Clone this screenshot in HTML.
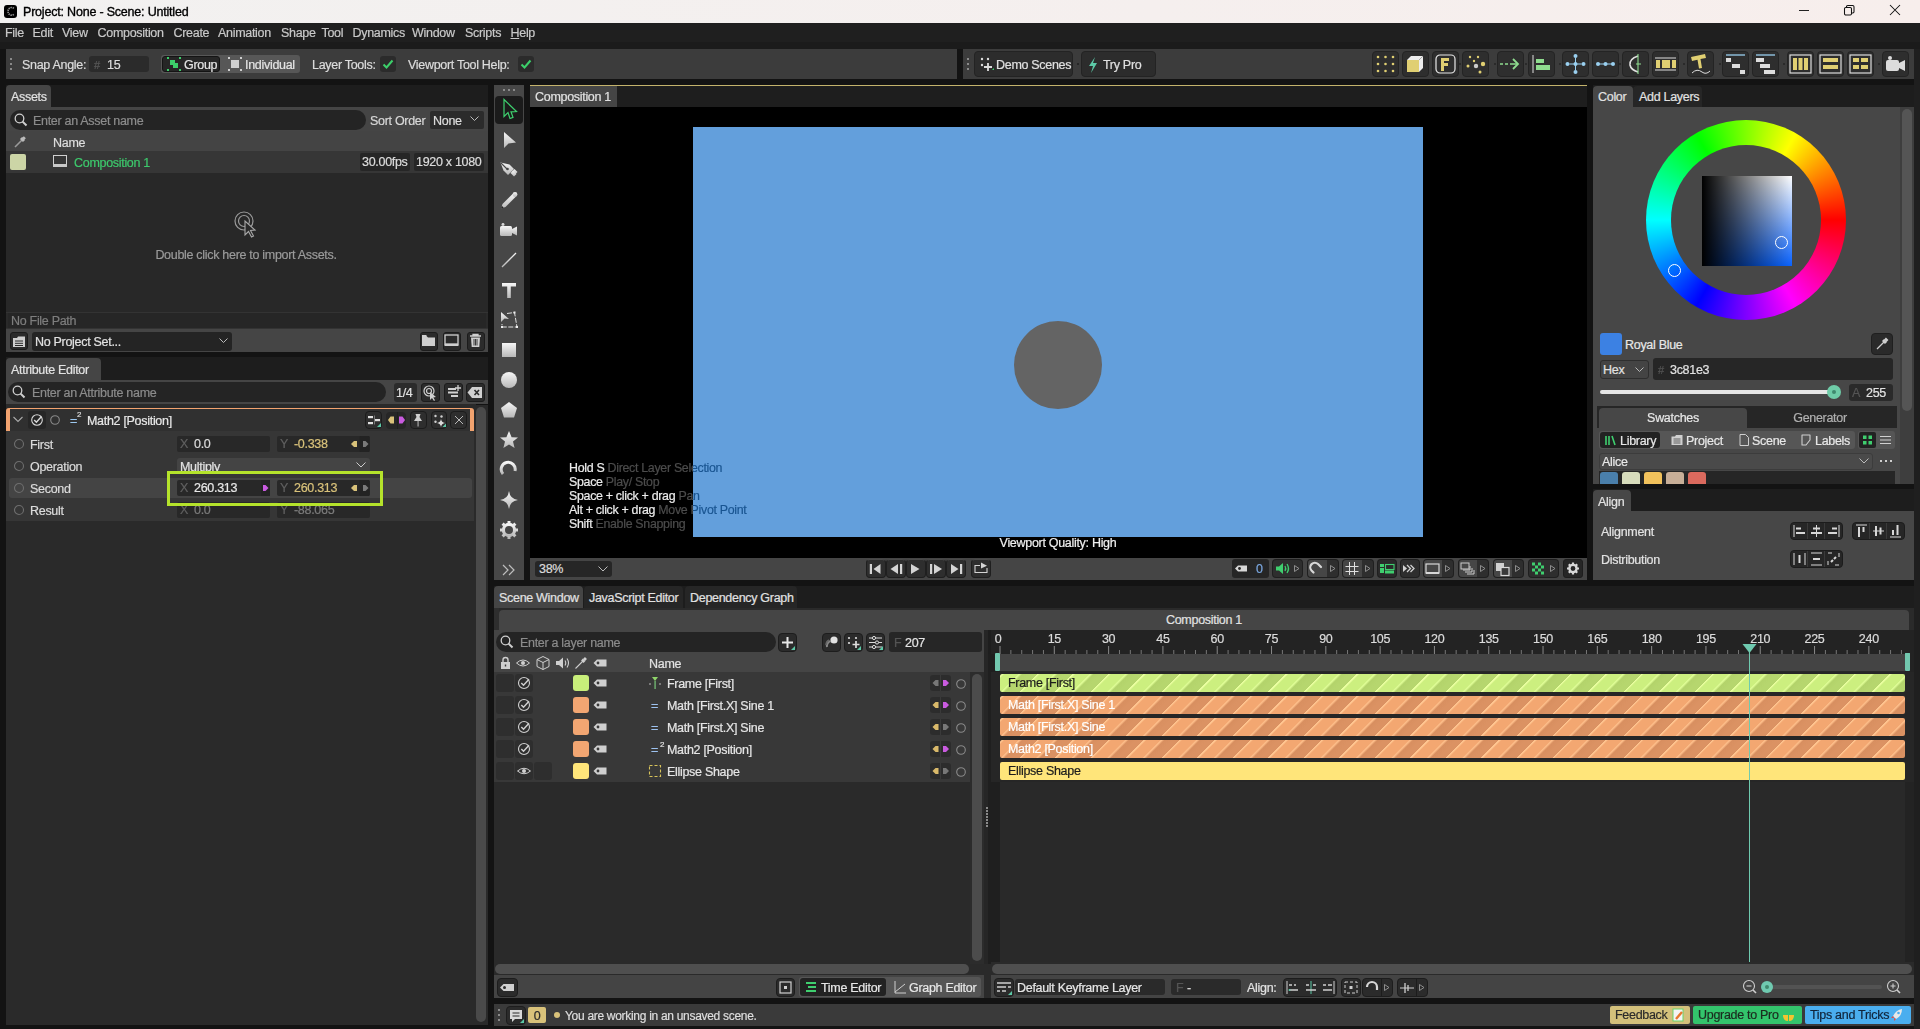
<!DOCTYPE html>
<html><head><meta charset="utf-8"><style>
html,body{margin:0;padding:0;}
body{width:1920px;height:1029px;overflow:hidden;position:relative;background:#131313;font-family:"Liberation Sans",sans-serif;}
.a{position:absolute;box-sizing:border-box;}
.t{white-space:nowrap;letter-spacing:-0.3px;-webkit-text-stroke-width:0.2px;}
</style></head><body>
<div class="a" style="left:0px;top:0px;width:1920px;height:23px;background:linear-gradient(to right,#f2f1f0,#f5efee 60%,#f7eeec);"></div>
<div class="a" style="left:4px;top:4.5px;width:12.5px;height:13px;border-radius:3px;background:#000;"></div>
<svg class="a" style="left:4px;top:4px;" width="13" height="14" viewBox="0 0 13 14"><path d="M9.8 4.3 A3.6 3.8 0 1 0 9.8 10.3" stroke="#9a9a9a" stroke-width="1.6" fill="none" stroke-dasharray="1.3 0.8"/></svg>
<div class="a t" style="left:23px;top:1.5px;height:20px;line-height:20px;font-size:12.5px;color:#000000;-webkit-text-stroke-width:0.35px;letter-spacing:-0.2px;">Project: None - Scene: Untitled</div>
<div class="a" style="left:1799px;top:10px;width:10px;height:1px;background:#222;"></div>
<svg class="a" style="left:1843px;top:4px;" width="13" height="13" viewBox="0 0 13 13"><rect x="1.5" y="3.5" width="7" height="7.5" rx="1.3" stroke="#111" stroke-width="1.05" fill="none"/><path d="M3.5 3 V2.8 Q3.5 1.5 4.8 1.5 H9.7 Q11 1.5 11 2.8 V7.8 Q11 9 9.8 9 H9" stroke="#111" stroke-width="1.05" fill="none"/></svg>
<svg class="a" style="left:1889px;top:4px;" width="12" height="12" viewBox="0 0 12 12"><path d="M1 1 L11 11 M11 1 L1 11" stroke="#111" stroke-width="1.05"/></svg>
<div class="a" style="left:0px;top:23px;width:1920px;height:26px;background:#1f1f1f;"></div>
<div class="a" style="left:0px;top:41.5px;width:1920px;height:7.5px;background:#1b1b1b;"></div>
<div class="a t" style="left:5px;top:23.0px;height:20px;line-height:20px;font-size:12.5px;color:#c9c9c9;">File</div>
<div class="a t" style="left:32.5px;top:23.0px;height:20px;line-height:20px;font-size:12.5px;color:#c9c9c9;">Edit</div>
<div class="a t" style="left:62px;top:23.0px;height:20px;line-height:20px;font-size:12.5px;color:#c9c9c9;">View</div>
<div class="a t" style="left:97.5px;top:23.0px;height:20px;line-height:20px;font-size:12.5px;color:#c9c9c9;">Composition</div>
<div class="a t" style="left:173.5px;top:23.0px;height:20px;line-height:20px;font-size:12.5px;color:#c9c9c9;">Create</div>
<div class="a t" style="left:218px;top:23.0px;height:20px;line-height:20px;font-size:12.5px;color:#c9c9c9;">Animation</div>
<div class="a t" style="left:281px;top:23.0px;height:20px;line-height:20px;font-size:12.5px;color:#c9c9c9;">Shape</div>
<div class="a t" style="left:321.5px;top:23.0px;height:20px;line-height:20px;font-size:12.5px;color:#c9c9c9;">Tool</div>
<div class="a t" style="left:352.5px;top:23.0px;height:20px;line-height:20px;font-size:12.5px;color:#c9c9c9;">Dynamics</div>
<div class="a t" style="left:412px;top:23.0px;height:20px;line-height:20px;font-size:12.5px;color:#c9c9c9;">Window</div>
<div class="a t" style="left:465px;top:23.0px;height:20px;line-height:20px;font-size:12.5px;color:#c9c9c9;">Scripts</div>
<div class="a t" style="left:510.5px;top:23.0px;height:20px;line-height:20px;font-size:12.5px;color:#c9c9c9;"><u>H</u>elp</div>
<div class="a" style="left:0px;top:49px;width:1920px;height:36px;background:#131313;"></div>
<div class="a" style="left:6px;top:49px;width:951px;height:30px;background:#3c3c3c;"></div>
<div class="a" style="left:10px;top:58px;width:2px;height:2px;background:#8a8a8a;"></div>
<div class="a" style="left:10px;top:63px;width:2px;height:2px;background:#8a8a8a;"></div>
<div class="a" style="left:10px;top:68px;width:2px;height:2px;background:#8a8a8a;"></div>
<div class="a t" style="left:22px;top:54.5px;height:20px;line-height:20px;font-size:12.5px;color:#dcdcdc;">Snap Angle:</div>
<div class="a" style="left:89px;top:56px;width:60px;height:16px;background:#2b2b2b;border-radius:3px;"></div>
<div class="a t" style="left:94px;top:54.5px;height:20px;line-height:20px;font-size:11px;color:#5a5a5a;">#</div>
<div class="a t" style="left:107px;top:54.5px;height:20px;line-height:20px;font-size:12.5px;color:#dcdcdc;">15</div>
<div class="a" style="left:161px;top:55px;width:139px;height:18px;background:#575757;border-radius:3px;"></div>
<div class="a" style="left:162px;top:56px;width:58px;height:16px;background:#262626;border-radius:3px;border:1px solid #141414;"></div>
<svg class="a" style="left:167px;top:57px;" width="14" height="14" viewBox="0 0 14 14"><rect x="3" y="3" width="5" height="5" fill="#3ccf6a"/><rect x="6" y="6" width="5" height="5" fill="#3ccf6a"/><rect x="0" y="0" width="2" height="2" fill="#3ccf6a"/><rect x="12" y="0" width="2" height="2" fill="#3ccf6a"/><rect x="0" y="12" width="2" height="2" fill="#3ccf6a"/><rect x="12" y="12" width="2" height="2" fill="#3ccf6a"/></svg>
<div class="a t" style="left:184px;top:54.5px;height:20px;line-height:20px;font-size:12.5px;color:#e4e4e4;">Group</div>
<svg class="a" style="left:228px;top:57px;" width="14" height="14" viewBox="0 0 14 14"><rect x="3" y="3" width="8" height="8" fill="#cfcfcf"/><rect x="0" y="0" width="2" height="2" fill="#cfcfcf"/><rect x="12" y="0" width="2" height="2" fill="#cfcfcf"/><rect x="0" y="12" width="2" height="2" fill="#cfcfcf"/><rect x="12" y="12" width="2" height="2" fill="#cfcfcf"/></svg>
<div class="a t" style="left:245px;top:54.5px;height:20px;line-height:20px;font-size:12.5px;color:#e4e4e4;">Individual</div>
<div class="a t" style="left:312px;top:54.5px;height:20px;line-height:20px;font-size:12.5px;color:#dcdcdc;">Layer Tools:</div>
<div class="a" style="left:380px;top:56px;width:16px;height:16px;background:#2b2b2b;border-radius:3px;"></div>
<svg class="a" style="left:380px;top:56px;" width="16" height="16" viewBox="0 0 16 16"><path d="M3.5 8.5 L6.5 11.5 L12.5 4.5" stroke="#3ccf6a" stroke-width="2" fill="none"/></svg>
<div class="a t" style="left:408px;top:54.5px;height:20px;line-height:20px;font-size:12.5px;color:#dcdcdc;">Viewport Tool Help:</div>
<div class="a" style="left:518px;top:56px;width:16px;height:16px;background:#2b2b2b;border-radius:3px;"></div>
<svg class="a" style="left:518px;top:56px;" width="16" height="16" viewBox="0 0 16 16"><path d="M3.5 8.5 L6.5 11.5 L12.5 4.5" stroke="#3ccf6a" stroke-width="2" fill="none"/></svg>
<div class="a" style="left:963px;top:49px;width:951px;height:30px;background:#3c3c3c;"></div>
<div class="a" style="left:967px;top:58px;width:2px;height:2px;background:#8a8a8a;"></div>
<div class="a" style="left:967px;top:63px;width:2px;height:2px;background:#8a8a8a;"></div>
<div class="a" style="left:967px;top:68px;width:2px;height:2px;background:#8a8a8a;"></div>
<div class="a" style="left:974px;top:51px;width:99px;height:26px;background:#2c2c2c;border-radius:4px;border:1px solid #232323;"></div>
<svg class="a" style="left:979px;top:56px;" width="16" height="16" viewBox="0 0 16 16"><circle cx="3" cy="3" r="1.2" fill="#ddd"/><circle cx="9" cy="3" r="1.2" fill="#ddd"/><circle cx="3" cy="9" r="1.2" fill="#ddd"/><path d="M9 7 V15 M5 11 H13" stroke="#ddd" stroke-width="1.8"/><path d="M13 14 L15 12 V14 Z" fill="#3ccf6a"/></svg>
<div class="a t" style="left:996px;top:54.5px;height:20px;line-height:20px;font-size:12.5px;color:#e0e0e0;">Demo Scenes</div>
<div class="a" style="left:1077px;top:63px;width:2px;height:2px;background:#262626;"></div>
<div class="a" style="left:1081px;top:51px;width:75px;height:26px;background:#2c2c2c;border-radius:4px;border:1px solid #232323;"></div>
<svg class="a" style="left:1087px;top:57px;" width="12" height="16" viewBox="0 0 12 16"><path d="M8 0 L2 9 H6 L4 16 L10 6 H6 Z" fill="#5cc9a7"/></svg>
<div class="a t" style="left:1103px;top:54.5px;height:20px;line-height:20px;font-size:12.5px;color:#e0e0e0;">Try Pro</div>
<div class="a" style="left:6px;top:85px;width:482px;height:22px;background:#1d1d1d;"></div>
<div class="a" style="left:6px;top:85px;width:45px;height:22px;background:#454545;border-radius:4px 4px 0 0;"></div>
<div class="a t" style="left:11px;top:86.5px;height:20px;line-height:20px;font-size:12.5px;color:#e2e2e2;">Assets</div>
<div class="a" style="left:6px;top:107px;width:482px;height:45px;background:#454545;"></div>
<div class="a" style="left:10px;top:110px;width:356px;height:20px;background:#242424;border-radius:10px;"></div>
<svg class="a" style="left:14px;top:113px;" width="14" height="14" viewBox="0 0 14 14"><circle cx="5.5" cy="5.5" r="4.3" stroke="#cfcfcf" stroke-width="1.3" fill="none"/><path d="M8.6 8.6 L12.5 12.5" stroke="#cfcfcf" stroke-width="2"/></svg>
<div class="a t" style="left:33px;top:110.5px;height:20px;line-height:20px;font-size:12.5px;color:#8c8c8c;">Enter an Asset name</div>
<div class="a t" style="left:370px;top:110.5px;height:20px;line-height:20px;font-size:12.5px;color:#d8d8d8;">Sort Order</div>
<div class="a" style="left:430px;top:111px;width:54px;height:18px;background:#2b2b2b;border-radius:2px;"></div>
<div class="a t" style="left:433px;top:110.5px;height:20px;line-height:20px;font-size:12.5px;color:#dedede;">None</div>
<svg class="a" style="left:470px;top:116px;" width="9" height="6" viewBox="0 0 9 6"><path d="M0.5 0.5 L4.5 4.5 L8.5 0.5" stroke="#bbb" stroke-width="1" fill="none"/></svg>
<div class="a" style="left:6px;top:131px;width:482px;height:20px;background:#444444;"></div>
<svg class="a" style="left:13px;top:135px;" width="14" height="14" viewBox="0 0 14 14"><path d="M2 12 L9 5" stroke="#9a9a9a" stroke-width="1.6"/><path d="M8 3 L11 6" stroke="#bbb" stroke-width="3"/><path d="M10 2 L12 4" stroke="#bbb" stroke-width="2.4"/></svg>
<div class="a t" style="left:53px;top:133.0px;height:20px;line-height:20px;font-size:12.5px;color:#dedede;">Name</div>
<div class="a" style="left:6px;top:151px;width:482px;height:22px;background:#363636;"></div>
<div class="a" style="left:10px;top:154px;width:16px;height:16px;background:#ccd5a6;border-radius:2px;"></div>
<svg class="a" style="left:53px;top:155px;" width="15" height="13" viewBox="0 0 15 13"><rect x="0.5" y="0.5" width="13" height="10" stroke="#d0d0d0" stroke-width="1" fill="none"/><rect x="0" y="9" width="14" height="3" fill="#c8c8c8"/></svg>
<div class="a t" style="left:74px;top:152.5px;height:20px;line-height:20px;font-size:12.5px;color:#3dc96c;">Composition 1</div>
<div class="a" style="left:360px;top:153px;width:50px;height:18px;background:#262626;border-radius:2px;"></div>
<div class="a t" style="left:362px;top:152.0px;height:20px;line-height:20px;font-size:12.5px;color:#dcdcdc;">30.00fps</div>
<div class="a" style="left:414px;top:153px;width:70px;height:18px;background:#262626;border-radius:2px;"></div>
<div class="a t" style="left:416px;top:152.0px;height:20px;line-height:20px;font-size:12.5px;color:#dcdcdc;">1920 x 1080</div>
<div class="a" style="left:6px;top:173px;width:482px;height:139px;background:#282828;"></div>
<svg class="a" style="left:234px;top:211px;" width="24" height="28" viewBox="0 0 24 28"><circle cx="10" cy="10" r="9" stroke="#9a9a9a" stroke-width="1.2" fill="none"/><circle cx="10" cy="10" r="5.5" stroke="#9a9a9a" stroke-width="1.2" fill="none"/><path d="M11 10 L11 24 L14.5 20.5 L17.5 26 L19.5 25 L16.5 19.5 L21 19 Z" fill="#2a2a2a" stroke="#a8a8a8" stroke-width="1.1"/></svg>
<div class="a t" style="left:96.0px;top:245.0px;width:300px;text-align:center;height:20px;line-height:20px;font-size:12.5px;color:#9b9b9b;">Double click here to import Assets.</div>
<div class="a" style="left:6px;top:312px;width:482px;height:17px;background:#2a2a2a;border-top:1px solid #333;border-bottom:1px solid #333;"></div>
<div class="a" style="left:8px;top:313px;width:478px;height:15px;background:#262626;"></div>
<div class="a t" style="left:11px;top:311.0px;height:20px;line-height:20px;font-size:12.5px;color:#7e7e7e;">No File Path</div>
<div class="a" style="left:6px;top:329px;width:482px;height:23px;background:#454545;"></div>
<div class="a" style="left:10px;top:332px;width:18px;height:18px;background:#2b2b2b;border-radius:3px;border:1px solid #1c1c1c;"></div>
<svg class="a" style="left:12px;top:335px;" width="14" height="13" viewBox="0 0 14 13"><path d="M1 3 H5 L6 1.5 H13 V12 H1 Z" fill="#cfcfcf"/><path d="M3 6 H11 M3 8.3 H11 M3 10.5 H11" stroke="#2b2b2b" stroke-width="1"/></svg>
<div class="a" style="left:32px;top:332px;width:200px;height:19px;background:#242424;border-radius:3px;"></div>
<div class="a t" style="left:35px;top:331.5px;height:20px;line-height:20px;font-size:12.5px;color:#e2e2e2;">No Project Set...</div>
<svg class="a" style="left:219px;top:338px;" width="9" height="6" viewBox="0 0 9 6"><path d="M0.5 0.5 L4.5 4.5 L8.5 0.5" stroke="#bbb" stroke-width="1" fill="none"/></svg>
<div class="a" style="left:420px;top:332px;width:18px;height:19px;background:#2b2b2b;border-radius:3px;border:1px solid #1c1c1c;"></div>
<svg class="a" style="left:420px;top:332px;" width="18" height="18" viewBox="0 0 18 18"><path d="M2 4 H6.5 L8 5.5 H15 V14 H2 Z" fill="#cfcfcf"/><path d="M2 4 V3 H6 L7 4" fill="#cfcfcf"/></svg>
<div class="a" style="left:443px;top:332px;width:18px;height:19px;background:#2b2b2b;border-radius:3px;border:1px solid #1c1c1c;"></div>
<svg class="a" style="left:443px;top:332px;" width="18" height="18" viewBox="0 0 18 18"><rect x="2" y="3" width="13" height="9" stroke="#d0d0d0" stroke-width="1.3" fill="none"/><rect x="1.5" y="12" width="14" height="2" fill="#cfcfcf"/></svg>
<div class="a" style="left:467px;top:332px;width:18px;height:19px;background:#2b2b2b;border-radius:3px;border:1px solid #1c1c1c;"></div>
<svg class="a" style="left:467px;top:332px;" width="18" height="18" viewBox="0 0 18 18"><path d="M3 4 H14 M6 4 V2.5 H11 V4" stroke="#cfcfcf" stroke-width="1.3" fill="none"/><path d="M4 5.5 H13 L12.3 15 H4.7 Z" fill="#cfcfcf"/><path d="M7 7 V13.5 M8.5 7 V13.5 M10 7 V13.5" stroke="#2b2b2b" stroke-width="0.9"/></svg>
<div class="a" style="left:6px;top:357px;width:482px;height:23px;background:#1d1d1d;"></div>
<div class="a" style="left:6px;top:358px;width:95px;height:22px;background:#454545;border-radius:4px 4px 0 0;"></div>
<div class="a t" style="left:11px;top:359.5px;height:20px;line-height:20px;font-size:12.5px;color:#e2e2e2;">Attribute Editor</div>
<div class="a" style="left:6px;top:380px;width:482px;height:24px;background:#454545;"></div>
<div class="a" style="left:8px;top:382px;width:378px;height:20px;background:#242424;border-radius:10px;"></div>
<svg class="a" style="left:12px;top:385px;" width="14" height="14" viewBox="0 0 14 14"><circle cx="5.5" cy="5.5" r="4.3" stroke="#cfcfcf" stroke-width="1.3" fill="none"/><path d="M8.6 8.6 L12.5 12.5" stroke="#cfcfcf" stroke-width="2"/></svg>
<div class="a t" style="left:32px;top:382.5px;height:20px;line-height:20px;font-size:12.5px;color:#8c8c8c;">Enter an Attribute name</div>
<div class="a" style="left:394px;top:383px;width:23px;height:19px;background:#2b2b2b;border-radius:3px;"></div>
<div class="a t" style="left:396px;top:382.5px;height:20px;line-height:20px;font-size:12.5px;color:#e0e0e0;">1/4</div>
<div class="a" style="left:421px;top:383px;width:19px;height:19px;background:#2b2b2b;border-radius:3px;border:1px solid #1c1c1c;"></div>
<div class="a" style="left:444px;top:383px;width:19px;height:19px;background:#2b2b2b;border-radius:3px;border:1px solid #1c1c1c;"></div>
<div class="a" style="left:466px;top:383px;width:19px;height:19px;background:#2b2b2b;border-radius:3px;border:1px solid #1c1c1c;"></div>
<svg class="a" style="left:421px;top:383px;" width="19" height="19" viewBox="0 0 19 19"><circle cx="8" cy="8" r="5" stroke="#d0d0d0" stroke-width="1.2" fill="none"/><circle cx="8" cy="8" r="2.5" stroke="#d0d0d0" stroke-width="1.2" fill="none"/><path d="M9 9 L9 17 L11 15 L13 18 L14 17.3 L12.3 14.5 L15 14 Z" fill="#d0d0d0"/></svg>
<svg class="a" style="left:444px;top:383px;" width="19" height="19" viewBox="0 0 19 19"><path d="M4 6 H12 M4 9.5 H14 M7 13 H14" stroke="#d0d0d0" stroke-width="1.8"/><path d="M14 2 V8 M11 5 H17" stroke="#d0d0d0" stroke-width="1.3"/></svg>
<svg class="a" style="left:466px;top:383px;" width="19" height="19" viewBox="0 0 19 19"><path d="M6 4 H16 V15 H6 L1.5 9.5 Z" fill="#d0d0d0"/><path d="M8.5 7 L13 12 M13 7 L8.5 12" stroke="#2b2b2b" stroke-width="1.6"/></svg>
<div class="a" style="left:6px;top:405px;width:482px;height:620px;background:#2a2a2a;"></div>
<div class="a" style="left:476px;top:407px;width:10px;height:615px;background:#4a4a4a;border-radius:5px;"></div>
<div class="a" style="left:6px;top:404px;width:470px;height:4px;background:#2a2a2a;"></div>
<div class="a" style="left:6px;top:408px;width:468px;height:23px;background:#303030;border-top:1.5px solid #f2a36f;border-left:4px solid #f2a36f;border-right:4px solid #f2a36f;border-radius:3px 3px 0 0;"></div>
<div class="a" style="left:6px;top:431px;width:468px;height:1px;background:#2a2a2a;"></div>
<svg class="a" style="left:13px;top:416px;" width="10" height="7" viewBox="0 0 10 7"><path d="M0.5 1 L5 5.5 L9.5 1" stroke="#aaa" stroke-width="1.1" fill="none"/></svg>
<div class="a" style="left:28px;top:411px;width:18px;height:18px;background:#262626;border-radius:3px;"></div>
<svg class="a" style="left:28px;top:411px;" width="18" height="18" viewBox="0 0 18 18"><circle cx="9" cy="9" r="5.3" stroke="#d8d8d8" stroke-width="1.1" fill="none"/><path d="M6.2 9 L8.4 11.2 L13.5 5.5" stroke="#d8d8d8" stroke-width="1.5" fill="none"/></svg>
<svg class="a" style="left:49px;top:413px;" width="14" height="14" viewBox="0 0 14 14"><circle cx="6" cy="7" r="4.3" stroke="#888" stroke-width="1.1" fill="none"/></svg>
<div class="a t" style="left:70px;top:411.0px;height:20px;line-height:20px;font-size:12.5px;color:#9ec8f0;">=</div>
<div class="a t" style="left:77px;top:410.0px;height:10px;line-height:10px;font-size:8px;color:#d8d8d8;">2</div>
<div class="a t" style="left:87px;top:410.5px;height:20px;line-height:20px;font-size:12.5px;color:#e8e8e8;">Math2 [Position]</div>
<div class="a" style="left:365px;top:411px;width:17px;height:18px;background:#2e2e2e;border-radius:4px;border:1px solid #1c1c1c;"></div>
<div class="a" style="left:410px;top:411px;width:17px;height:18px;background:#2e2e2e;border-radius:4px;border:1px solid #1c1c1c;"></div>
<div class="a" style="left:431px;top:411px;width:16px;height:18px;background:#2e2e2e;border-radius:4px;border:1px solid #1c1c1c;"></div>
<div class="a" style="left:450px;top:411px;width:17px;height:18px;background:#2e2e2e;border-radius:4px;border:1px solid #1c1c1c;"></div>
<div class="a" style="left:386px;top:412px;width:20px;height:17px;background:#262626;border-radius:4px;"></div>
<div class="a" style="left:397px;top:412px;width:1px;height:17px;background:#1f1f1f;"></div>
<svg class="a" style="left:360px;top:405px;" width="120" height="30" viewBox="0 0 120 30"><rect x="8" y="11" width="5" height="2.2" fill="#e0e0e0"/><rect x="8" y="17" width="5" height="2.2" fill="#e0e0e0"/><rect x="14" y="10.5" width="1" height="9" fill="#777"/><rect x="15" y="14" width="5" height="2.2" fill="#e0e0e0"/><path d="M21 22 V18 L17 22 Z" fill="#5cc9a7"/>
<path d="M34 11.5 H30.5 L28 15 L30.5 18.5 H34 Z" fill="#d9c27a"/><path d="M39 11.5 H42.5 L45 15 L42.5 18.5 H39 Z" fill="#c95be0"/>
<path d="M55.5 9 H60.5 L59.5 12 L62 16 H54 L56.5 12 Z" fill="#d0d0d0"/><rect x="57.6" y="16" width="0.9" height="5.5" fill="#d0d0d0"/>
<circle cx="75.5" cy="11" r="1.2" fill="#cfcfcf"/><circle cx="81.5" cy="11.5" r="1.2" fill="#cfcfcf"/><circle cx="75.5" cy="16.8" r="1.2" fill="#cfcfcf"/><path d="M81 14 Q81.5 17.5 85 18 Q81.5 18.5 81 22 Q80.5 18.5 77 18 Q80.5 17.5 81 14 Z" fill="#dcdcdc"/><path d="M86 22 V18.5 L82.5 22 Z" fill="#5cc9a7"/>
<path d="M95 11 L103 19 M103 11 L95 19" stroke="#c8c8c8" stroke-width="0.9"/></svg>
<div class="a" style="left:6px;top:431px;width:468px;height:90px;background:#363636;"></div>
<div class="a" style="left:9px;top:478px;width:463px;height:20px;background:#444444;border-radius:3px;"></div>
<svg class="a" style="left:13px;top:438px;" width="12" height="12" viewBox="0 0 12 12"><circle cx="6" cy="6" r="4.5" stroke="#6e6e6e" stroke-width="1.1" fill="none"/></svg>
<div class="a t" style="left:30px;top:435.0px;height:20px;line-height:20px;font-size:12.5px;color:#dcdcdc;">First</div>
<svg class="a" style="left:13px;top:460px;" width="12" height="12" viewBox="0 0 12 12"><circle cx="6" cy="6" r="4.5" stroke="#6e6e6e" stroke-width="1.1" fill="none"/></svg>
<div class="a t" style="left:30px;top:457.0px;height:20px;line-height:20px;font-size:12.5px;color:#dcdcdc;">Operation</div>
<svg class="a" style="left:13px;top:482px;" width="12" height="12" viewBox="0 0 12 12"><circle cx="6" cy="6" r="4.5" stroke="#6e6e6e" stroke-width="1.1" fill="none"/></svg>
<div class="a t" style="left:30px;top:479.0px;height:20px;line-height:20px;font-size:12.5px;color:#dcdcdc;">Second</div>
<svg class="a" style="left:13px;top:504px;" width="12" height="12" viewBox="0 0 12 12"><circle cx="6" cy="6" r="4.5" stroke="#6e6e6e" stroke-width="1.1" fill="none"/></svg>
<div class="a t" style="left:30px;top:501.0px;height:20px;line-height:20px;font-size:12.5px;color:#dcdcdc;">Result</div>
<div class="a" style="left:177px;top:436px;width:93px;height:16px;background:#282828;border-radius:2px;"></div>
<div class="a t" style="left:180px;top:434.0px;height:20px;line-height:20px;font-size:12.5px;color:#606060;">X</div>
<div class="a t" style="left:194px;top:434.0px;height:20px;line-height:20px;font-size:12.5px;color:#dcdcdc;">0.0</div>
<div class="a" style="left:277px;top:436px;width:93px;height:16px;background:#282828;border-radius:2px;"></div>
<div class="a t" style="left:280px;top:434.0px;height:20px;line-height:20px;font-size:12.5px;color:#606060;">Y</div>
<div class="a t" style="left:294px;top:434.0px;height:20px;line-height:20px;font-size:12.5px;color:#d9c27a;">-0.338</div>
<svg class="a" style="left:346px;top:436px;" width="24" height="16" viewBox="0 0 24 16"><path d="M11 5 H8 L5 8 L8 11 H11 Z" fill="#d9c27a"/><rect x="13.5" y="0" width="10" height="16" rx="1" fill="#232323"/><path d="M17 5 H19.5 L22.5 8 L19.5 11 H17 Z" fill="#7a7a7a"/></svg>
<div class="a" style="left:177px;top:458px;width:193px;height:16px;background:#444444;border-radius:3px 3px 0 0;"></div>
<div class="a t" style="left:180px;top:456.5px;height:20px;line-height:20px;font-size:12.5px;color:#e2e2e2;">Multiply</div>
<svg class="a" style="left:356px;top:462px;" width="10" height="7" viewBox="0 0 10 7"><path d="M0.5 0.5 L5 5 L9.5 0.5" stroke="#ccc" stroke-width="1" fill="none"/></svg>
<div class="a" style="left:177px;top:480px;width:93px;height:16px;background:#282828;border-radius:2px;"></div>
<div class="a t" style="left:180px;top:478.0px;height:20px;line-height:20px;font-size:12.5px;color:#606060;">X</div>
<div class="a t" style="left:194px;top:478.0px;height:20px;line-height:20px;font-size:12.5px;color:#e8e8e8;">260.313</div>
<svg class="a" style="left:261px;top:480px;" width="9" height="16" viewBox="0 0 9 16"><rect x="0" y="0" width="9" height="16" fill="#232323"/><path d="M2 5 H4.5 L7.5 8 L4.5 11 H2 Z" fill="#c95be0"/></svg>
<div class="a" style="left:277px;top:480px;width:93px;height:16px;background:#282828;border-radius:2px;"></div>
<div class="a t" style="left:280px;top:478.0px;height:20px;line-height:20px;font-size:12.5px;color:#606060;">Y</div>
<div class="a t" style="left:294px;top:478.0px;height:20px;line-height:20px;font-size:12.5px;color:#d9c27a;">260.313</div>
<svg class="a" style="left:346px;top:480px;" width="24" height="16" viewBox="0 0 24 16"><path d="M11 5 H8 L5 8 L8 11 H11 Z" fill="#d9c27a"/><rect x="13.5" y="0" width="10" height="16" rx="1" fill="#232323"/><path d="M17 5 H19.5 L22.5 8 L19.5 11 H17 Z" fill="#7a7a7a"/></svg>
<div class="a" style="left:177px;top:502px;width:93px;height:16px;background:#282828;border-radius:2px;"></div>
<div class="a t" style="left:180px;top:500.0px;height:20px;line-height:20px;font-size:12.5px;color:#606060;">X</div>
<div class="a t" style="left:194px;top:500.0px;height:20px;line-height:20px;font-size:12.5px;color:#7c7c7c;">0.0</div>
<div class="a" style="left:277px;top:502px;width:93px;height:16px;background:#282828;border-radius:2px;"></div>
<div class="a t" style="left:280px;top:500.0px;height:20px;line-height:20px;font-size:12.5px;color:#606060;">Y</div>
<div class="a t" style="left:294px;top:500.0px;height:20px;line-height:20px;font-size:12.5px;color:#7c7c7c;">-88.065</div>
<div class="a" style="left:167px;top:471px;width:216px;height:35px;border:3px solid #b5e32b;"></div>
<div class="a" style="left:494px;top:85px;width:30px;height:495px;background:#474747;"></div>
<div class="a" style="left:503px;top:89px;width:2px;height:2px;background:#8a8a8a;"></div>
<div class="a" style="left:508px;top:89px;width:2px;height:2px;background:#8a8a8a;"></div>
<div class="a" style="left:513px;top:89px;width:2px;height:2px;background:#8a8a8a;"></div>
<div class="a" style="left:495px;top:96px;width:28px;height:28px;background:#1b1b1b;border-radius:4px;"></div>
<svg width="0" height="0" style="position:absolute"><defs><linearGradient id="tg" x1="0" y1="0" x2="0" y2="1"><stop offset="0" stop-color="#f6f6f6"/><stop offset="1" stop-color="#b8b8b8"/></linearGradient></defs></svg>
<svg class="a" style="left:497px;top:97px;" width="24" height="24" viewBox="0 0 24 24"><path d="M7 2.5 L7 19.5 L11 15.5 L13 21.5 L16 20.3 L14 14.8 L19.5 14.5 Z" fill="none" stroke="#3fd06f" stroke-width="1.2" stroke-linejoin="miter"/></svg>
<svg class="a" style="left:497px;top:128px;" width="24" height="24" viewBox="0 0 24 24"><path d="M7 4 L7 20 L11.5 15.5 L19 14.5 Z" fill="url(#tg)"/></svg>
<svg class="a" style="left:497px;top:158px;" width="24" height="24" viewBox="0 0 24 24"><path d="M3.5 4.5 L12.5 6.5 L17 11 L11 17 L6.5 12.5 Z" fill="url(#tg)"/><path d="M4 5 L10 11" stroke="#474747" stroke-width="1.1"/><circle cx="10.5" cy="11" r="1.3" fill="#474747"/><path d="M15 13.5 L17.5 11 L20.5 14 L18 16.5 Z" fill="url(#tg)"/><path d="M13.5 15 L16 12.5 L19.5 16 L17 18.5 Z" fill="url(#tg)"/></svg>
<svg class="a" style="left:497px;top:188px;" width="24" height="24" viewBox="0 0 24 24"><path d="M4 20.5 L5.5 16 L16 5.5 L19 8.5 L8.5 19 Z" fill="url(#tg)"/><circle cx="18" cy="6.5" r="2.4" fill="url(#tg)"/><path d="M4 20.5 L4.8 17.8 L6.7 19.7 Z" fill="#222"/></svg>
<svg class="a" style="left:497px;top:218px;" width="24" height="24" viewBox="0 0 24 24"><rect x="3" y="8" width="12" height="10" rx="1.5" fill="url(#tg)"/><path d="M15 11 L20 8.5 V17.5 L15 15 Z" fill="url(#tg)"/><circle cx="6" cy="6.5" r="1.5" fill="url(#tg)"/></svg>
<svg class="a" style="left:497px;top:248px;" width="24" height="24" viewBox="0 0 24 24"><path d="M5 19 L19 5" stroke="url(#tg)" stroke-width="1.3"/></svg>
<svg class="a" style="left:497px;top:278px;" width="24" height="24" viewBox="0 0 24 24"><path d="M5 5 H19 V8.5 H13.8 V20 H10.2 V8.5 H5 Z" fill="url(#tg)"/></svg>
<svg class="a" style="left:497px;top:308px;" width="24" height="24" viewBox="0 0 24 24"><path d="M4 4 L4 14 L7.5 10.5 L12 11 Z" fill="url(#tg)"/><path d="M10 5.5 L17.5 4.5 L20 19 L5 19 L5 16" stroke="#e0e0e0" stroke-width="1" stroke-dasharray="5 1.5" fill="none"/><rect x="16.5" y="3.5" width="2" height="2" fill="#eee"/><rect x="19" y="18" width="2" height="2" fill="#eee"/><rect x="4" y="18" width="2" height="2" fill="#eee"/></svg>
<svg class="a" style="left:497px;top:338px;" width="24" height="24" viewBox="0 0 24 24"><rect x="5" y="5" width="14" height="14" fill="url(#tg)"/></svg>
<svg class="a" style="left:497px;top:368px;" width="24" height="24" viewBox="0 0 24 24"><circle cx="12" cy="12" r="8" fill="url(#tg)"/></svg>
<svg class="a" style="left:497px;top:398px;" width="24" height="24" viewBox="0 0 24 24"><path d="M12 4 L20 10 L17 19.5 H7 L4 10 Z" fill="url(#tg)"/></svg>
<svg class="a" style="left:497px;top:428px;" width="24" height="24" viewBox="0 0 24 24"><path d="M12 3 L14.6 9.2 L21 9.5 L16 13.6 L17.6 20 L12 16.4 L6.4 20 L8 13.6 L3 9.5 L9.4 9.2 Z" fill="url(#tg)"/></svg>
<svg class="a" style="left:497px;top:458px;" width="24" height="24" viewBox="0 0 24 24"><path d="M6 16 A7 7 0 1 1 18 13" stroke="url(#tg)" stroke-width="3" fill="none"/></svg>
<svg class="a" style="left:497px;top:488px;" width="24" height="24" viewBox="0 0 24 24"><path d="M12 3 Q13 11 21 12 Q13 13 12 21 Q11 13 3 12 Q11 11 12 3 Z" fill="url(#tg)"/></svg>
<svg class="a" style="left:497px;top:518px;" width="24" height="24" viewBox="0 0 24 24"><circle cx="12" cy="12" r="5.6" fill="none" stroke="url(#tg)" stroke-width="3.2"/><path d="M12 3 V6 M12 18 V21 M3 12 H6 M18 12 H21 M5.6 5.6 L7.8 7.8 M16.2 16.2 L18.4 18.4 M5.6 18.4 L7.8 16.2 M16.2 7.8 L18.4 5.6" stroke="url(#tg)" stroke-width="3"/></svg>
<svg class="a" style="left:497px;top:558px;" width="24" height="24" viewBox="0 0 24 24"><path d="M6 7 L11 12 L6 17 M12 7 L17 12 L12 17" stroke="#bdbdbd" stroke-width="1.2" fill="none"/></svg>
<div class="a" style="left:530px;top:85px;width:1057px;height:22px;background:#1e1e1e;"></div>
<div class="a" style="left:530px;top:85px;width:1057px;height:1px;background:#c4b36c;"></div>
<div class="a" style="left:530px;top:86px;width:87px;height:21px;background:#454545;"></div>
<div class="a t" style="left:535px;top:86.5px;height:20px;line-height:20px;font-size:12.5px;color:#e2e2e2;">Composition 1</div>
<div class="a" style="left:530px;top:107px;width:1057px;height:451px;background:#000000;"></div>
<div class="a" style="left:693px;top:127px;width:730px;height:410px;background:#639fdc;"></div>
<div class="a" style="left:1014px;top:321px;width:88px;height:88px;border-radius:50%;background:#646464;"></div>
<div class="a t" style="left:569px;top:459.5px;height:16px;line-height:16px;font-size:12.4px;color:#ececec;">Hold S <span style="color:#4c4c4c;mix-blend-mode:difference;">Direct Layer Selection</span></div>
<div class="a t" style="left:569px;top:473.5px;height:16px;line-height:16px;font-size:12.4px;color:#ececec;">Space <span style="color:#4c4c4c;mix-blend-mode:difference;">Play/ Stop</span></div>
<div class="a t" style="left:569px;top:487.5px;height:16px;line-height:16px;font-size:12.4px;color:#ececec;">Space + click + drag <span style="color:#4c4c4c;mix-blend-mode:difference;">Pan</span></div>
<div class="a t" style="left:569px;top:501.5px;height:16px;line-height:16px;font-size:12.4px;color:#ececec;">Alt + click + drag <span style="color:#4c4c4c;mix-blend-mode:difference;">Move Pivot Point</span></div>
<div class="a t" style="left:569px;top:515.5px;height:16px;line-height:16px;font-size:12.4px;color:#ececec;">Shift <span style="color:#4c4c4c;mix-blend-mode:difference;">Enable Snapping</span></div>
<div class="a t" style="left:908.0px;top:533.0px;width:300px;text-align:center;height:20px;line-height:20px;font-size:12.5px;color:#f0f0f0;">Viewport Quality: High</div>
<div class="a" style="left:530px;top:558px;width:1057px;height:22px;background:#454545;"></div>
<div class="a" style="left:535px;top:561px;width:77px;height:16px;background:#262626;border-radius:3px;"></div>
<div class="a t" style="left:539px;top:559.0px;height:20px;line-height:20px;font-size:12.5px;color:#dcdcdc;">38%</div>
<svg class="a" style="left:598px;top:566px;" width="10" height="6" viewBox="0 0 10 6"><path d="M0.5 0.5 L5 5 L9.5 0.5" stroke="#bbb" stroke-width="1" fill="none"/></svg>
<div class="a" style="left:866px;top:559px;width:20px;height:19px;background:#2e2e2e;border-radius:4px;border:1px solid #1f1f1f;border-top:1.5px solid #4a4a4a;"></div>
<div class="a" style="left:886px;top:559px;width:20px;height:19px;background:#2e2e2e;border-radius:4px;border:1px solid #1f1f1f;border-top:1.5px solid #4a4a4a;"></div>
<div class="a" style="left:906px;top:559px;width:20px;height:19px;background:#2e2e2e;border-radius:4px;border:1px solid #1f1f1f;border-top:1.5px solid #4a4a4a;"></div>
<div class="a" style="left:926px;top:559px;width:20px;height:19px;background:#2e2e2e;border-radius:4px;border:1px solid #1f1f1f;border-top:1.5px solid #4a4a4a;"></div>
<div class="a" style="left:946px;top:559px;width:20px;height:19px;background:#2e2e2e;border-radius:4px;border:1px solid #1f1f1f;border-top:1.5px solid #4a4a4a;"></div>
<svg class="a" style="left:866px;top:559px;" width="20" height="19" viewBox="0 0 20 19"><rect x="3.8" y="5" width="2.2" height="10" fill="#d4d4d4"/><path d="M14.5 5 V15 L7.5 10 Z" fill="#d4d4d4"/></svg>
<svg class="a" style="left:886px;top:559px;" width="20" height="19" viewBox="0 0 20 19"><path d="M12 5 V15 L4.5 10 Z" fill="#d4d4d4"/><rect x="14" y="5" width="2.2" height="10" fill="#d4d4d4"/></svg>
<svg class="a" style="left:906px;top:559px;" width="20" height="19" viewBox="0 0 20 19"><path d="M5 5 V15 L13.5 10 Z" fill="#d4d4d4"/></svg>
<svg class="a" style="left:926px;top:559px;" width="20" height="19" viewBox="0 0 20 19"><rect x="4" y="5" width="2.2" height="10" fill="#d4d4d4"/><path d="M8 5 V15 L16 10 Z" fill="#d4d4d4"/></svg>
<svg class="a" style="left:946px;top:559px;" width="20" height="19" viewBox="0 0 20 19"><path d="M5 5 V15 L12.5 10 Z" fill="#d4d4d4"/><rect x="14" y="5" width="2.2" height="10" fill="#d4d4d4"/></svg>
<div class="a" style="left:971px;top:559px;width:20px;height:19px;background:#2e2e2e;border-radius:4px;border:1px solid #1f1f1f;border-top:1.5px solid #4a4a4a;"></div>
<svg class="a" style="left:971px;top:559px;" width="20" height="19" viewBox="0 0 20 19"><path d="M9 6.5 H4 V13.5 H16 V9" stroke="#d4d4d4" stroke-width="1.1" fill="none"/><path d="M10 3.5 L16 6.8 L10 9.5 Z" fill="#d4d4d4"/></svg>
<div class="a" style="left:1232px;top:559px;width:37px;height:19px;background:#262626;border-radius:3px;"></div>
<svg class="a" style="left:1233px;top:559px;" width="16" height="19" viewBox="0 0 16 19"><path d="M2 9.5 L5 6.5 H14 V12.5 H5 Z" fill="#d8d8d8"/><circle cx="6.5" cy="9.5" r="1.4" fill="#262626"/></svg>
<div class="a t" style="left:1256px;top:559.0px;height:20px;line-height:20px;font-size:12.5px;color:#7aa7e0;">0</div>
<div class="a" style="left:1272px;top:559px;width:31px;height:19px;background:#1f1f1f;border-radius:4px;"></div>
<div class="a" style="left:1273px;top:560px;width:18px;height:17px;background:#2e2e2e;border-radius:3px 0 0 3px;"></div>
<div class="a" style="left:1291px;top:560px;width:11px;height:17px;background:#2e2e2e;border-radius:0 3px 3px 0;"></div>
<svg class="a" style="left:1292px;top:559px;" width="10" height="19" viewBox="0 0 10 19"><path d="M2.5 6.5 L7 9.5 L2.5 12.5 Z" stroke="#999" stroke-width="0.9" fill="none"/></svg>
<svg class="a" style="left:1272px;top:559px;" width="20" height="19" viewBox="0 0 20 19"><path d="M4 7.5 H7 L11 4 V15 L7 11.5 H4 Z" fill="#3fcf6f"/><path d="M13 7 Q14.5 9.5 13 12 M15 5 Q18 9.5 15 14" stroke="#3fcf6f" stroke-width="1.3" fill="none"/></svg>
<div class="a" style="left:1307px;top:559px;width:32px;height:19px;background:#1f1f1f;border-radius:4px;"></div>
<div class="a" style="left:1308px;top:560px;width:19px;height:17px;background:#464646;border-radius:3px 0 0 3px;"></div>
<div class="a" style="left:1327px;top:560px;width:11px;height:17px;background:#2e2e2e;border-radius:0 3px 3px 0;"></div>
<svg class="a" style="left:1328px;top:559px;" width="10" height="19" viewBox="0 0 10 19"><path d="M2.5 6.5 L7 9.5 L2.5 12.5 Z" stroke="#999" stroke-width="0.9" fill="none"/></svg>
<svg class="a" style="left:1307px;top:559px;" width="20" height="19" viewBox="0 0 20 19"><path d="M6.5 13.5 L4.5 11.5 A4.6 4.6 0 0 1 11 5 L14 8" stroke="#d8d8d8" stroke-width="2.2" fill="none" stroke-linecap="round"/></svg>
<div class="a" style="left:1342px;top:559px;width:32px;height:19px;background:#1f1f1f;border-radius:4px;"></div>
<div class="a" style="left:1343px;top:560px;width:19px;height:17px;background:#464646;border-radius:3px 0 0 3px;"></div>
<div class="a" style="left:1362px;top:560px;width:11px;height:17px;background:#2e2e2e;border-radius:0 3px 3px 0;"></div>
<svg class="a" style="left:1363px;top:559px;" width="10" height="19" viewBox="0 0 10 19"><path d="M2.5 6.5 L7 9.5 L2.5 12.5 Z" stroke="#999" stroke-width="0.9" fill="none"/></svg>
<svg class="a" style="left:1342px;top:559px;" width="20" height="19" viewBox="0 0 20 19"><path d="M7.5 3 V16 M12.5 3 V16 M3.5 7.5 H16.5 M3.5 12.5 H16.5" stroke="#e0e0e0" stroke-width="1"/></svg>
<div class="a" style="left:1377px;top:559px;width:20px;height:19px;background:#1f1f1f;border-radius:4px;"></div>
<div class="a" style="left:1378px;top:560px;width:18px;height:17px;background:#2a2a2a;border-radius:3px;"></div>
<svg class="a" style="left:1377px;top:559px;" width="20" height="19" viewBox="0 0 20 19"><rect x="3" y="5" width="4" height="3" fill="#3fcf6f"/><rect x="3" y="9" width="4" height="5" fill="#3fcf6f"/><rect x="8.5" y="5.5" width="8.5" height="5" stroke="#3fcf6f" stroke-width="1.1" fill="none"/><rect x="8" y="11.5" width="9" height="3" fill="#3fcf6f"/></svg>
<div class="a" style="left:1400px;top:559px;width:20px;height:19px;background:#1f1f1f;border-radius:4px;"></div>
<div class="a" style="left:1401px;top:560px;width:18px;height:17px;background:#2e2e2e;border-radius:3px;"></div>
<svg class="a" style="left:1400px;top:559px;" width="20" height="19" viewBox="0 0 20 19"><path d="M3 6 L7 9.5 L3 13 Z" fill="#d0d0d0"/><path d="M7 6 L10.5 9.5 L7 13 M10.5 6 L14 9.5 L10.5 13" stroke="#d0d0d0" stroke-width="1.3" fill="none"/></svg>
<div class="a" style="left:1423px;top:559px;width:31px;height:19px;background:#1f1f1f;border-radius:4px;"></div>
<div class="a" style="left:1424px;top:560px;width:18px;height:17px;background:#464646;border-radius:3px 0 0 3px;"></div>
<div class="a" style="left:1442px;top:560px;width:11px;height:17px;background:#2e2e2e;border-radius:0 3px 3px 0;"></div>
<svg class="a" style="left:1443px;top:559px;" width="10" height="19" viewBox="0 0 10 19"><path d="M2.5 6.5 L7 9.5 L2.5 12.5 Z" stroke="#999" stroke-width="0.9" fill="none"/></svg>
<svg class="a" style="left:1423px;top:559px;" width="20" height="19" viewBox="0 0 20 19"><rect x="3" y="5" width="13" height="9" stroke="#d8d8d8" stroke-width="1.2" fill="none"/><rect x="3" y="13" width="13" height="2" fill="#d8d8d8"/></svg>
<div class="a" style="left:1458px;top:559px;width:31px;height:19px;background:#1f1f1f;border-radius:4px;"></div>
<div class="a" style="left:1459px;top:560px;width:18px;height:17px;background:#464646;border-radius:3px 0 0 3px;"></div>
<div class="a" style="left:1477px;top:560px;width:11px;height:17px;background:#2e2e2e;border-radius:0 3px 3px 0;"></div>
<svg class="a" style="left:1478px;top:559px;" width="10" height="19" viewBox="0 0 10 19"><path d="M2.5 6.5 L7 9.5 L2.5 12.5 Z" stroke="#999" stroke-width="0.9" fill="none"/></svg>
<svg class="a" style="left:1458px;top:559px;" width="20" height="19" viewBox="0 0 20 19"><rect x="3" y="4" width="8" height="6" stroke="#ccc" stroke-width="1" fill="none"/><path d="M12 7 V11 H5 M14 9 V13 H7 M16 11 V15 H9" stroke="#ccc" stroke-width="1" fill="none"/></svg>
<div class="a" style="left:1493px;top:559px;width:31px;height:19px;background:#1f1f1f;border-radius:4px;"></div>
<div class="a" style="left:1494px;top:560px;width:18px;height:17px;background:#464646;border-radius:3px 0 0 3px;"></div>
<div class="a" style="left:1512px;top:560px;width:11px;height:17px;background:#2e2e2e;border-radius:0 3px 3px 0;"></div>
<svg class="a" style="left:1513px;top:559px;" width="10" height="19" viewBox="0 0 10 19"><path d="M2.5 6.5 L7 9.5 L2.5 12.5 Z" stroke="#999" stroke-width="0.9" fill="none"/></svg>
<svg class="a" style="left:1493px;top:559px;" width="20" height="19" viewBox="0 0 20 19"><rect x="3" y="4" width="8" height="8" fill="#cfcfcf"/><rect x="8" y="8.5" width="8" height="8" stroke="#d8d8d8" stroke-width="1.2" fill="#3a3a3a"/></svg>
<div class="a" style="left:1528px;top:559px;width:31px;height:19px;background:#1f1f1f;border-radius:4px;"></div>
<div class="a" style="left:1529px;top:560px;width:18px;height:17px;background:#2e2e2e;border-radius:3px 0 0 3px;"></div>
<div class="a" style="left:1547px;top:560px;width:11px;height:17px;background:#2e2e2e;border-radius:0 3px 3px 0;"></div>
<svg class="a" style="left:1548px;top:559px;" width="10" height="19" viewBox="0 0 10 19"><path d="M2.5 6.5 L7 9.5 L2.5 12.5 Z" stroke="#999" stroke-width="0.9" fill="none"/></svg>
<svg class="a" style="left:1528px;top:559px;" width="20" height="19" viewBox="0 0 20 19"><rect x="4" y="3.5" width="3" height="3" fill="#3fcf6f"/><rect x="4" y="9.5" width="3" height="3" fill="#3fcf6f"/><rect x="7" y="6.5" width="3" height="3" fill="#3fcf6f"/><rect x="7" y="12.5" width="3" height="3" fill="#3fcf6f"/><rect x="10" y="3.5" width="3" height="3" fill="#3fcf6f"/><rect x="10" y="9.5" width="3" height="3" fill="#3fcf6f"/><rect x="13" y="6.5" width="3" height="3" fill="#3fcf6f"/><rect x="13" y="12.5" width="3" height="3" fill="#3fcf6f"/></svg>
<div class="a" style="left:1563px;top:559px;width:20px;height:19px;background:#262626;border-radius:3px;border:1px solid #1e1e1e;"></div>
<svg class="a" style="left:1563px;top:559px;" width="20" height="19" viewBox="0 0 20 19"><circle cx="10" cy="9.5" r="3.6" fill="none" stroke="#d8d8d8" stroke-width="2.4"/><path d="M10 3.5 V5.5 M10 13.5 V15.5 M4 9.5 H6 M14 9.5 H16 M5.8 5.3 L7.2 6.7 M12.8 12.3 L14.2 13.7 M5.8 13.7 L7.2 12.3 M12.8 6.7 L14.2 5.3" stroke="#d8d8d8" stroke-width="2.2"/></svg>
<div class="a" style="left:1593px;top:85px;width:321px;height:22px;background:#1d1d1d;"></div>
<div class="a" style="left:1593px;top:86px;width:40px;height:21px;background:#474747;border-radius:4px 4px 0 0;"></div>
<div class="a t" style="left:1598px;top:86.5px;height:20px;line-height:20px;font-size:12.5px;color:#e2e2e2;">Color</div>
<div class="a" style="left:1633px;top:86px;width:69px;height:21px;background:#262626;border-radius:4px 4px 0 0;"></div>
<div class="a t" style="left:1639px;top:86.5px;height:20px;line-height:20px;font-size:12.5px;color:#e2e2e2;">Add Layers</div>
<div class="a" style="left:1593px;top:107px;width:321px;height:377px;background:#474747;"></div>
<div class="a" style="left:1900px;top:107px;width:14px;height:377px;background:#3e3e3e;"></div>
<div class="a" style="left:1902px;top:109px;width:10px;height:302px;background:#555555;border-radius:5px;"></div>
<div class="a" style="left:1646px;top:120px;width:200px;height:200px;border-radius:50%;background:conic-gradient(hsl(90,100%,50%) 0deg,hsl(75,100%,50%) 15deg,hsl(60,100%,50%) 30deg,hsl(45,100%,50%) 45deg,hsl(30,100%,50%) 60deg,hsl(15,100%,50%) 75deg,hsl(0,100%,50%) 90deg,hsl(345,100%,50%) 105deg,hsl(330,100%,50%) 120deg,hsl(315,100%,50%) 135deg,hsl(300,100%,50%) 150deg,hsl(285,100%,50%) 165deg,hsl(270,100%,50%) 180deg,hsl(255,100%,50%) 195deg,hsl(240,100%,50%) 210deg,hsl(225,100%,50%) 225deg,hsl(210,100%,50%) 240deg,hsl(195,100%,50%) 255deg,hsl(180,100%,50%) 270deg,hsl(165,100%,50%) 285deg,hsl(150,100%,50%) 300deg,hsl(135,100%,50%) 315deg,hsl(120,100%,50%) 330deg,hsl(105,100%,50%) 345deg,hsl(90,100%,50%) 360deg);"></div>
<div class="a" style="left:1671px;top:145px;width:150px;height:150px;border-radius:50%;background:#474747;"></div>
<div class="a" style="left:1702px;top:176px;width:90px;height:90px;background:linear-gradient(to right,#000,rgba(0,0,0,0)),linear-gradient(to bottom,#fff,#0a63ff);"></div>
<div class="a" style="left:1775px;top:236px;width:13px;height:13px;border-radius:50%;border:1.2px solid #fff;"></div>
<div class="a" style="left:1668px;top:264px;width:13px;height:13px;border-radius:50%;border:1.2px solid #fff;"></div>
<div class="a" style="left:1600px;top:333px;width:22px;height:22px;background:#3c81e3;border-radius:3px;"></div>
<div class="a t" style="left:1625px;top:335.0px;height:20px;line-height:20px;font-size:12.5px;color:#e8e8e8;">Royal Blue</div>
<div class="a" style="left:1871px;top:333px;width:22px;height:22px;background:#2a2a2a;border-radius:4px;border:1px solid #1f1f1f;"></div>
<svg class="a" style="left:1871px;top:333px;" width="22" height="22" viewBox="0 0 22 22"><path d="M6 16 L13 9" stroke="#cfcfcf" stroke-width="1.3"/><path d="M12 7 L15 10" stroke="#cfcfcf" stroke-width="3"/><path d="M14 5.5 L16.5 8" stroke="#cfcfcf" stroke-width="2.6"/></svg>
<div class="a" style="left:1600px;top:360px;width:49px;height:19px;background:#444444;border-radius:3px;border:1px solid #2e2e2e;"></div>
<div class="a t" style="left:1603px;top:359.5px;height:20px;line-height:20px;font-size:12.5px;color:#e2e2e2;">Hex</div>
<svg class="a" style="left:1635px;top:367px;" width="9" height="6" viewBox="0 0 9 6"><path d="M0.5 0.5 L4.5 4.5 L8.5 0.5" stroke="#bbb" stroke-width="1" fill="none"/></svg>
<div class="a" style="left:1653px;top:358px;width:240px;height:22px;background:#262626;border-radius:3px;"></div>
<div class="a t" style="left:1658px;top:359.5px;height:20px;line-height:20px;font-size:11px;color:#555;">#</div>
<div class="a t" style="left:1670px;top:359.5px;height:20px;line-height:20px;font-size:12.5px;color:#e2e2e2;">3c81e3</div>
<div class="a" style="left:1600px;top:390px;width:234px;height:4px;background:#e6e6e6;border-radius:2px;"></div>
<div class="a" style="left:1827px;top:385px;width:14px;height:14px;border-radius:50%;background:#6fcca8;"></div>
<div class="a" style="left:1832px;top:390px;width:4px;height:4px;border-radius:50%;background:#3f8a6e;"></div>
<div class="a" style="left:1849px;top:384px;width:44px;height:17px;background:#2a2a2a;border-radius:3px;"></div>
<div class="a t" style="left:1852px;top:382.5px;height:20px;line-height:20px;font-size:12.5px;color:#555;">A</div>
<div class="a t" style="left:1866px;top:382.5px;height:20px;line-height:20px;font-size:12.5px;color:#e2e2e2;">255</div>
<div class="a" style="left:1597px;top:406px;width:300px;height:22px;background:#262626;"></div>
<div class="a" style="left:1599px;top:408px;width:148px;height:20px;background:#474747;border-radius:4px 4px 0 0;"></div>
<div class="a t" style="left:1523.0px;top:407.5px;width:300px;text-align:center;height:20px;line-height:20px;font-size:12.5px;color:#e8e8e8;">Swatches</div>
<div class="a t" style="left:1670.0px;top:407.5px;width:300px;text-align:center;height:20px;line-height:20px;font-size:12.5px;color:#b0b0b0;">Generator</div>
<div class="a" style="left:1599px;top:431px;width:256px;height:18px;background:#565656;border-radius:3px;"></div>
<div class="a" style="left:1600px;top:432px;width:60px;height:16px;background:#222;border-radius:3px;"></div>
<svg class="a" style="left:1604px;top:433px;" width="14" height="14" viewBox="0 0 14 14"><path d="M2 3 V12 M5 3 V12 M8 3 L11 12" stroke="#3fcf6f" stroke-width="1.6"/></svg>
<div class="a t" style="left:1620px;top:430.5px;height:20px;line-height:20px;font-size:12.5px;color:#e8e8e8;">Library</div>
<svg class="a" style="left:1670px;top:433px;" width="14" height="14" viewBox="0 0 14 14"><path d="M1.5 3.5 H5 L6 2 H12.5 V12 H1.5 Z" fill="#cfcfcf"/><path d="M3.5 6 H10.5 M3.5 8 H10.5 M3.5 10 H10.5" stroke="#565656" stroke-width="0.9"/></svg>
<div class="a t" style="left:1686px;top:430.5px;height:20px;line-height:20px;font-size:12.5px;color:#e8e8e8;">Project</div>
<svg class="a" style="left:1737px;top:433px;" width="14" height="14" viewBox="0 0 14 14"><path d="M3 1.5 H8.5 L11.5 4.5 V12.5 H3 Z" stroke="#cfcfcf" stroke-width="1" fill="none"/></svg>
<div class="a t" style="left:1752px;top:430.5px;height:20px;line-height:20px;font-size:12.5px;color:#e8e8e8;">Scene</div>
<svg class="a" style="left:1799px;top:433px;" width="14" height="14" viewBox="0 0 14 14"><path d="M3 2 H11 V7 L7 12 H3 Z" stroke="#cfcfcf" stroke-width="1.1" fill="none" stroke-linejoin="round"/></svg>
<div class="a t" style="left:1815px;top:430.5px;height:20px;line-height:20px;font-size:12.5px;color:#e8e8e8;">Labels</div>
<div class="a" style="left:1858px;top:431px;width:37px;height:18px;background:#555555;border-radius:3px;"></div>
<div class="a" style="left:1859px;top:432px;width:17px;height:16px;background:#222;border-radius:2px;"></div>
<svg class="a" style="left:1859px;top:432px;" width="17" height="16" viewBox="0 0 17 16"><rect x="4" y="3.5" width="3.5" height="3.5" fill="#3fcf6f"/><rect x="9.5" y="3.5" width="3.5" height="3.5" fill="#3fcf6f"/><rect x="4" y="9" width="3.5" height="3.5" fill="#3fcf6f"/><rect x="9.5" y="9" width="3.5" height="3.5" fill="#3fcf6f"/></svg>
<svg class="a" style="left:1877px;top:432px;" width="17" height="16" viewBox="0 0 17 16"><path d="M3 4.5 H14 M3 8 H14 M3 11.5 H14" stroke="#d0d0d0" stroke-width="1.1"/></svg>
<div class="a" style="left:1599px;top:453px;width:274px;height:17px;background:#4a4a4a;border-radius:3px;border:1px solid #3c3c3c;"></div>
<div class="a t" style="left:1602px;top:451.5px;height:20px;line-height:20px;font-size:12.5px;color:#e8e8e8;">Alice</div>
<svg class="a" style="left:1859px;top:458px;" width="10" height="6" viewBox="0 0 10 6"><path d="M0.5 0.5 L5 5 L9.5 0.5" stroke="#bbb" stroke-width="1" fill="none"/></svg>
<div class="a" style="left:1880px;top:460px;width:2px;height:2px;background:#cfcfcf;"></div>
<div class="a" style="left:1885px;top:460px;width:2px;height:2px;background:#cfcfcf;"></div>
<div class="a" style="left:1890px;top:460px;width:2px;height:2px;background:#cfcfcf;"></div>
<div class="a" style="left:1599px;top:471px;width:296px;height:13px;background:#262626;"></div>
<div class="a" style="left:1600px;top:472px;width:18px;height:13px;background:#4a7fab;border-radius:3px 3px 0 0;"></div>
<div class="a" style="left:1622px;top:472px;width:18px;height:13px;background:#d7dcbc;border-radius:3px 3px 0 0;"></div>
<div class="a" style="left:1644px;top:472px;width:18px;height:13px;background:#f2c25c;border-radius:3px 3px 0 0;"></div>
<div class="a" style="left:1666px;top:472px;width:18px;height:13px;background:#c8af98;border-radius:3px 3px 0 0;"></div>
<div class="a" style="left:1688px;top:472px;width:18px;height:13px;background:#db6a5e;border-radius:3px 3px 0 0;"></div>
<div class="a" style="left:1593px;top:484px;width:321px;height:5px;background:#131313;"></div>
<div class="a" style="left:1593px;top:489px;width:321px;height:22px;background:#1d1d1d;"></div>
<div class="a" style="left:1593px;top:490px;width:38px;height:21px;background:#474747;border-radius:4px 4px 0 0;"></div>
<div class="a t" style="left:1598px;top:491.5px;height:20px;line-height:20px;font-size:12.5px;color:#e2e2e2;">Align</div>
<div class="a" style="left:1593px;top:511px;width:321px;height:69px;background:#474747;"></div>
<div class="a t" style="left:1601px;top:521.5px;height:20px;line-height:20px;font-size:12.5px;color:#e2e2e2;">Alignment</div>
<div class="a t" style="left:1601px;top:549.5px;height:20px;line-height:20px;font-size:12.5px;color:#e2e2e2;">Distribution</div>
<div class="a" style="left:1790px;top:522px;width:53px;height:18px;background:#262626;border-radius:4px;border:1px solid #1c1c1c;"></div>
<svg class="a" style="left:1791px;top:522px;" width="17" height="18" viewBox="0 0 17 18"><path d="M3 3 V15" stroke="#d8d8d8" stroke-width="1"/><path d="M5 6.5 H10 M5 11 H14" stroke="#d8d8d8" stroke-width="2"/></svg>
<svg class="a" style="left:1808px;top:522px;" width="17" height="18" viewBox="0 0 17 18"><path d="M8.5 3 V15" stroke="#d8d8d8" stroke-width="1"/><path d="M5 6.5 H12 M3 11 H14" stroke="#d8d8d8" stroke-width="2"/></svg>
<div class="a" style="left:1807px;top:523px;width:1px;height:16px;background:#3a3a3a;"></div>
<svg class="a" style="left:1825px;top:522px;" width="17" height="18" viewBox="0 0 17 18"><path d="M14 3 V15" stroke="#d8d8d8" stroke-width="1"/><path d="M7 6.5 H12 M3 11 H12" stroke="#d8d8d8" stroke-width="2"/></svg>
<div class="a" style="left:1824px;top:523px;width:1px;height:16px;background:#3a3a3a;"></div>
<div class="a" style="left:1852px;top:522px;width:53px;height:18px;background:#262626;border-radius:4px;border:1px solid #1c1c1c;"></div>
<svg class="a" style="left:1853px;top:522px;" width="17" height="18" viewBox="0 0 17 18"><path d="M3 3 H14" stroke="#d8d8d8" stroke-width="1"/><path d="M6 5 V15 M10.5 5 V10" stroke="#d8d8d8" stroke-width="2"/></svg>
<svg class="a" style="left:1870px;top:522px;" width="17" height="18" viewBox="0 0 17 18"><path d="M3 9 H14" stroke="#d8d8d8" stroke-width="1"/><path d="M6 4 V14 M10.5 5.5 V12.5" stroke="#d8d8d8" stroke-width="2"/></svg>
<div class="a" style="left:1869px;top:523px;width:1px;height:16px;background:#3a3a3a;"></div>
<svg class="a" style="left:1887px;top:522px;" width="17" height="18" viewBox="0 0 17 18"><path d="M3 15 H14" stroke="#d8d8d8" stroke-width="1"/><path d="M6 8 V13 M10.5 3 V13" stroke="#d8d8d8" stroke-width="2"/></svg>
<div class="a" style="left:1886px;top:523px;width:1px;height:16px;background:#3a3a3a;"></div>
<div class="a" style="left:1790px;top:550px;width:53px;height:18px;background:#262626;border-radius:4px;border:1px solid #1c1c1c;"></div>
<svg class="a" style="left:1791px;top:550px;" width="17" height="18" viewBox="0 0 17 18"><path d="M3 3 V15 M14 3 V15" stroke="#d8d8d8" stroke-width="1"/><path d="M8.5 5 V13" stroke="#d8d8d8" stroke-width="2"/></svg>
<svg class="a" style="left:1808px;top:550px;" width="17" height="18" viewBox="0 0 17 18"><path d="M3 3 H14 M3 15 H14" stroke="#d8d8d8" stroke-width="1"/><path d="M5 9 H12" stroke="#d8d8d8" stroke-width="2"/></svg>
<div class="a" style="left:1807px;top:551px;width:1px;height:16px;background:#3a3a3a;"></div>
<svg class="a" style="left:1825px;top:550px;" width="17" height="18" viewBox="0 0 17 18"><path d="M3 15 V11 M3 3 H7 M14 15 H10 M14 3 V7" stroke="#d8d8d8" stroke-width="1"/><path d="M6 12 L8 10 M9 9 L11 7" stroke="#d8d8d8" stroke-width="2"/></svg>
<div class="a" style="left:1824px;top:551px;width:1px;height:16px;background:#3a3a3a;"></div>
<div class="a" style="left:494px;top:586px;width:1420px;height:22px;background:#1d1d1d;"></div>
<div class="a" style="left:494px;top:586px;width:89px;height:22px;background:#454545;border-radius:4px 4px 0 0;"></div>
<div class="a t" style="left:499px;top:587.5px;height:20px;line-height:20px;font-size:12.5px;color:#e2e2e2;">Scene Window</div>
<div class="a" style="left:584px;top:586px;width:99px;height:22px;background:#262626;border-radius:4px 4px 0 0;"></div>
<div class="a t" style="left:589px;top:587.5px;height:20px;line-height:20px;font-size:12.5px;color:#e2e2e2;">JavaScript Editor</div>
<div class="a" style="left:685px;top:586px;width:112px;height:22px;background:#262626;border-radius:4px 4px 0 0;"></div>
<div class="a t" style="left:690px;top:587.5px;height:20px;line-height:20px;font-size:12.5px;color:#e2e2e2;">Dependency Graph</div>
<div class="a" style="left:494px;top:608px;width:1420px;height:390px;background:#2a2a2a;"></div>
<div class="a" style="left:494px;top:608px;width:5px;height:22px;background:#2e2e2e;"></div>
<div class="a" style="left:499px;top:610px;width:1410px;height:20px;background:#454545;border-radius:4px 4px 0 0;"></div>
<div class="a t" style="left:1054.0px;top:609.5px;width:300px;text-align:center;height:20px;line-height:20px;font-size:12.5px;color:#e2e2e2;">Composition 1</div>
<div class="a" style="left:494px;top:630px;width:490px;height:42px;background:#454545;"></div>
<div class="a" style="left:496px;top:632px;width:280px;height:20px;background:#242424;border-radius:10px;"></div>
<svg class="a" style="left:500px;top:635px;" width="14" height="14" viewBox="0 0 14 14"><circle cx="5.5" cy="5.5" r="4.3" stroke="#cfcfcf" stroke-width="1.3" fill="none"/><path d="M8.6 8.6 L12.5 12.5" stroke="#cfcfcf" stroke-width="2"/></svg>
<div class="a t" style="left:520px;top:632.5px;height:20px;line-height:20px;font-size:12.5px;color:#8c8c8c;">Enter a layer name</div>
<div class="a" style="left:778px;top:633px;width:19px;height:19px;background:#2b2b2b;border-radius:4px;border:1px solid #1d1d1d;"></div>
<svg class="a" style="left:778px;top:633px;" width="19" height="19" viewBox="0 0 19 19"><path d="M9.5 4 V15 M4 9.5 H15" stroke="#e8e8e8" stroke-width="2"/></svg>
<svg class="a" style="left:791px;top:646px;" width="5" height="5" viewBox="0 0 5 5"><path d="M4 0 V4 H0 Z" fill="#5cc9a7"/></svg>
<div class="a" style="left:822px;top:633px;width:19px;height:19px;background:#2b2b2b;border-radius:4px;border:1px solid #1d1d1d;"></div>
<svg class="a" style="left:822px;top:633px;" width="19" height="19" viewBox="0 0 19 19"><circle cx="12" cy="7" r="3.6" fill="#e0e0e0"/><path d="M5 14 A5 5 0 0 1 9 8" stroke="#888" stroke-width="2" fill="none"/><path d="M4 12 A6 6 0 0 1 7 7" stroke="#666" stroke-width="1.6" fill="none"/></svg>
<div class="a" style="left:844px;top:633px;width:19px;height:19px;background:#2b2b2b;border-radius:4px;border:1px solid #1d1d1d;"></div>
<svg class="a" style="left:844px;top:633px;" width="19" height="19" viewBox="0 0 19 19"><circle cx="5" cy="5" r="1.1" fill="#ddd"/><circle cx="12" cy="5" r="1.1" fill="#ddd"/><circle cx="5" cy="10" r="1.1" fill="#ddd"/><path d="M12 8 V15 M8.5 11.5 H15.5" stroke="#ddd" stroke-width="1.7"/></svg>
<svg class="a" style="left:857px;top:646px;" width="5" height="5" viewBox="0 0 5 5"><path d="M4 0 V4 H0 Z" fill="#5cc9a7"/></svg>
<div class="a" style="left:866px;top:633px;width:19px;height:19px;background:#2b2b2b;border-radius:4px;border:1px solid #1d1d1d;"></div>
<svg class="a" style="left:866px;top:633px;" width="19" height="19" viewBox="0 0 19 19"><path d="M3 5 H16 M3 9.5 H16 M3 14 H16" stroke="#ddd" stroke-width="1"/><circle cx="8" cy="5" r="1.6" fill="#2b2b2b" stroke="#ddd" stroke-width="1"/><circle cx="11" cy="9.5" r="1.6" fill="#2b2b2b" stroke="#ddd" stroke-width="1"/><circle cx="8" cy="14" r="1.6" fill="#2b2b2b" stroke="#ddd" stroke-width="1"/></svg>
<svg class="a" style="left:879px;top:646px;" width="5" height="5" viewBox="0 0 5 5"><path d="M4 0 V4 H0 Z" fill="#5cc9a7"/></svg>
<div class="a" style="left:889px;top:632px;width:93px;height:20px;background:#262626;border-radius:3px;"></div>
<div class="a t" style="left:894px;top:632.5px;height:20px;line-height:20px;font-size:12.5px;color:#555;">F</div>
<div class="a t" style="left:905px;top:632.5px;height:20px;line-height:20px;font-size:12.5px;color:#e4e4e4;">207</div>
<svg class="a" style="left:498px;top:655px;" width="16" height="16" viewBox="0 0 16 16"><rect x="3" y="7" width="9" height="7" fill="#cfcfcf"/><path d="M5 7 V5 A2.5 2.5 0 0 1 10 5 V7" stroke="#cfcfcf" stroke-width="1.4" fill="none"/><rect x="6.8" y="9.5" width="1.4" height="2" fill="#3a3a3a"/></svg>
<svg class="a" style="left:515px;top:655px;" width="16" height="16" viewBox="0 0 16 16"><path d="M1.5 8 Q8 2 14.5 8 Q8 14 1.5 8 Z" stroke="#cfcfcf" stroke-width="1" fill="none"/><circle cx="8" cy="8" r="2" fill="#cfcfcf"/></svg>
<svg class="a" style="left:535px;top:655px;" width="16" height="16" viewBox="0 0 16 16"><path d="M8 1.5 L14 4.5 V11.5 L8 14.5 L2 11.5 V4.5 Z M2 4.5 L8 7.5 L14 4.5 M8 7.5 V14.5" stroke="#cfcfcf" stroke-width="1" fill="none"/></svg>
<svg class="a" style="left:554px;top:655px;" width="16" height="16" viewBox="0 0 16 16"><path d="M2 6 H5 L9 2.5 V13.5 L5 10 H2 Z" fill="#cfcfcf"/><path d="M11 5.5 Q12.5 8 11 10.5 M13 3.5 Q16 8 13 12.5" stroke="#cfcfcf" stroke-width="1.1" fill="none"/></svg>
<svg class="a" style="left:573px;top:655px;" width="16" height="16" viewBox="0 0 16 16"><path d="M2.5 13.5 L10 6" stroke="#cfcfcf" stroke-width="1.1"/><path d="M9 4.5 L11.5 7" stroke="#cfcfcf" stroke-width="2.6"/><path d="M11 3 L13 5" stroke="#cfcfcf" stroke-width="2.6"/></svg>
<svg class="a" style="left:592px;top:655px;" width="16" height="16" viewBox="0 0 16 16"><path d="M1.5 8 L5 4.5 H14.5 V11.5 H5 Z" fill="#cfcfcf"/><circle cx="6" cy="8" r="1.4" fill="#3a3a3a"/></svg>
<div class="a t" style="left:649px;top:654.0px;height:20px;line-height:20px;font-size:12.5px;color:#e2e2e2;">Name</div>
<div class="a" style="left:494px;top:672px;width:476px;height:110px;background:#383838;"></div>
<div class="a" style="left:496px;top:674px;width:18px;height:18px;background:#2e2e2e;border-radius:3px;"></div>
<div class="a" style="left:515px;top:674px;width:18px;height:18px;background:#2e2e2e;border-radius:3px;"></div>
<svg class="a" style="left:515px;top:674px;" width="18" height="18" viewBox="0 0 18 18"><circle cx="9" cy="9" r="5.5" stroke="#d0d0d0" stroke-width="1.1" fill="none"/><path d="M6.3 9 L8.5 11.2 L14 5.2" stroke="#d0d0d0" stroke-width="1.5" fill="none"/></svg>
<div class="a" style="left:573px;top:675px;width:16px;height:16px;background:#c8ee7a;border-radius:3px;"></div>
<svg class="a" style="left:592px;top:675px;" width="16" height="16" viewBox="0 0 16 16"><path d="M1.5 8 L5 4.5 H14.5 V11.5 H5 Z" fill="#cfcfcf"/><circle cx="6" cy="8" r="1.4" fill="#393939"/></svg>
<svg class="a" style="left:647px;top:675px;" width="16" height="16" viewBox="0 0 16 16"><path d="M5 2 H11 L8 6 Z" fill="#8fd46a"/><rect x="7.3" y="6" width="1.6" height="8" fill="#6aa56a"/><circle cx="3" cy="9" r="0.8" fill="#ccc"/><circle cx="13" cy="9" r="0.8" fill="#ccc"/></svg>
<div class="a t" style="left:667px;top:674.0px;height:20px;line-height:20px;font-size:12.5px;color:#e6e6e6;">Frame [First]</div>
<div class="a" style="left:930px;top:675px;width:21px;height:16px;background:#2c2c2c;border-radius:3px;"></div>
<div class="a" style="left:940px;top:675px;width:1px;height:16px;background:#3a3a3a;"></div>
<svg class="a" style="left:930px;top:675px;" width="21" height="16" viewBox="0 0 21 16"><path d="M8.5 5 H5.5 L2.5 8 L5.5 11 H8.5 Z" fill="#777"/><path d="M13 5 H16 L19 8 L16 11 H13 Z" fill="#c95be0"/></svg>
<svg class="a" style="left:955px;top:678px;" width="12" height="12" viewBox="0 0 12 12"><circle cx="6" cy="6" r="4.3" stroke="#8a8a8a" stroke-width="1.1" fill="none"/></svg>
<div class="a" style="left:496px;top:696px;width:18px;height:18px;background:#2e2e2e;border-radius:3px;"></div>
<div class="a" style="left:515px;top:696px;width:18px;height:18px;background:#2e2e2e;border-radius:3px;"></div>
<svg class="a" style="left:515px;top:696px;" width="18" height="18" viewBox="0 0 18 18"><circle cx="9" cy="9" r="5.5" stroke="#d0d0d0" stroke-width="1.1" fill="none"/><path d="M6.3 9 L8.5 11.2 L14 5.2" stroke="#d0d0d0" stroke-width="1.5" fill="none"/></svg>
<div class="a" style="left:573px;top:697px;width:16px;height:16px;background:#f2a672;border-radius:3px;"></div>
<svg class="a" style="left:592px;top:697px;" width="16" height="16" viewBox="0 0 16 16"><path d="M1.5 8 L5 4.5 H14.5 V11.5 H5 Z" fill="#cfcfcf"/><circle cx="6" cy="8" r="1.4" fill="#393939"/></svg>
<div class="a t" style="left:651px;top:696.0px;height:20px;line-height:20px;font-size:12.5px;color:#9ec3f0;">=</div>
<div class="a t" style="left:667px;top:696.0px;height:20px;line-height:20px;font-size:12.5px;color:#e6e6e6;">Math [First.X] Sine 1</div>
<div class="a" style="left:930px;top:697px;width:21px;height:16px;background:#2c2c2c;border-radius:3px;"></div>
<div class="a" style="left:940px;top:697px;width:1px;height:16px;background:#3a3a3a;"></div>
<svg class="a" style="left:930px;top:697px;" width="21" height="16" viewBox="0 0 21 16"><path d="M8.5 5 H5.5 L2.5 8 L5.5 11 H8.5 Z" fill="#d9b96a"/><path d="M13 5 H16 L19 8 L16 11 H13 Z" fill="#c95be0"/></svg>
<svg class="a" style="left:955px;top:700px;" width="12" height="12" viewBox="0 0 12 12"><circle cx="6" cy="6" r="4.3" stroke="#8a8a8a" stroke-width="1.1" fill="none"/></svg>
<div class="a" style="left:496px;top:718px;width:18px;height:18px;background:#2e2e2e;border-radius:3px;"></div>
<div class="a" style="left:515px;top:718px;width:18px;height:18px;background:#2e2e2e;border-radius:3px;"></div>
<svg class="a" style="left:515px;top:718px;" width="18" height="18" viewBox="0 0 18 18"><circle cx="9" cy="9" r="5.5" stroke="#d0d0d0" stroke-width="1.1" fill="none"/><path d="M6.3 9 L8.5 11.2 L14 5.2" stroke="#d0d0d0" stroke-width="1.5" fill="none"/></svg>
<div class="a" style="left:573px;top:719px;width:16px;height:16px;background:#f2a672;border-radius:3px;"></div>
<svg class="a" style="left:592px;top:719px;" width="16" height="16" viewBox="0 0 16 16"><path d="M1.5 8 L5 4.5 H14.5 V11.5 H5 Z" fill="#cfcfcf"/><circle cx="6" cy="8" r="1.4" fill="#393939"/></svg>
<div class="a t" style="left:651px;top:718.0px;height:20px;line-height:20px;font-size:12.5px;color:#9ec3f0;">=</div>
<div class="a t" style="left:667px;top:718.0px;height:20px;line-height:20px;font-size:12.5px;color:#e6e6e6;">Math [First.X] Sine</div>
<div class="a" style="left:930px;top:719px;width:21px;height:16px;background:#2c2c2c;border-radius:3px;"></div>
<div class="a" style="left:940px;top:719px;width:1px;height:16px;background:#3a3a3a;"></div>
<svg class="a" style="left:930px;top:719px;" width="21" height="16" viewBox="0 0 21 16"><path d="M8.5 5 H5.5 L2.5 8 L5.5 11 H8.5 Z" fill="#d9b96a"/><path d="M13 5 H16 L19 8 L16 11 H13 Z" fill="#777"/></svg>
<svg class="a" style="left:955px;top:722px;" width="12" height="12" viewBox="0 0 12 12"><circle cx="6" cy="6" r="4.3" stroke="#8a8a8a" stroke-width="1.1" fill="none"/></svg>
<div class="a" style="left:496px;top:740px;width:18px;height:18px;background:#2e2e2e;border-radius:3px;"></div>
<div class="a" style="left:515px;top:740px;width:18px;height:18px;background:#2e2e2e;border-radius:3px;"></div>
<svg class="a" style="left:515px;top:740px;" width="18" height="18" viewBox="0 0 18 18"><circle cx="9" cy="9" r="5.5" stroke="#d0d0d0" stroke-width="1.1" fill="none"/><path d="M6.3 9 L8.5 11.2 L14 5.2" stroke="#d0d0d0" stroke-width="1.5" fill="none"/></svg>
<div class="a" style="left:573px;top:741px;width:16px;height:16px;background:#f2a672;border-radius:3px;"></div>
<svg class="a" style="left:592px;top:741px;" width="16" height="16" viewBox="0 0 16 16"><path d="M1.5 8 L5 4.5 H14.5 V11.5 H5 Z" fill="#cfcfcf"/><circle cx="6" cy="8" r="1.4" fill="#393939"/></svg>
<div class="a t" style="left:651px;top:740.0px;height:20px;line-height:20px;font-size:12.5px;color:#9ec3f0;">=</div>
<div class="a t" style="left:660px;top:740.0px;height:10px;line-height:10px;font-size:8px;color:#e0e0e0;">2</div>
<div class="a t" style="left:667px;top:740.0px;height:20px;line-height:20px;font-size:12.5px;color:#e6e6e6;">Math2 [Position]</div>
<div class="a" style="left:930px;top:741px;width:21px;height:16px;background:#2c2c2c;border-radius:3px;"></div>
<div class="a" style="left:940px;top:741px;width:1px;height:16px;background:#3a3a3a;"></div>
<svg class="a" style="left:930px;top:741px;" width="21" height="16" viewBox="0 0 21 16"><path d="M8.5 5 H5.5 L2.5 8 L5.5 11 H8.5 Z" fill="#d9b96a"/><path d="M13 5 H16 L19 8 L16 11 H13 Z" fill="#c95be0"/></svg>
<svg class="a" style="left:955px;top:744px;" width="12" height="12" viewBox="0 0 12 12"><circle cx="6" cy="6" r="4.3" stroke="#8a8a8a" stroke-width="1.1" fill="none"/></svg>
<div class="a" style="left:496px;top:762px;width:18px;height:18px;background:#2e2e2e;border-radius:3px;"></div>
<div class="a" style="left:515px;top:762px;width:18px;height:18px;background:#2e2e2e;border-radius:3px;"></div>
<div class="a" style="left:534px;top:762px;width:18px;height:18px;background:#2e2e2e;border-radius:3px;"></div>
<svg class="a" style="left:515px;top:762px;" width="18" height="18" viewBox="0 0 18 18"><path d="M2.5 9 Q9 3.5 15.5 9 Q9 14.5 2.5 9 Z" stroke="#d0d0d0" stroke-width="1" fill="none"/><circle cx="9" cy="9" r="2" fill="#d0d0d0"/></svg>
<div class="a" style="left:573px;top:763px;width:16px;height:16px;background:#ffe57a;border-radius:3px;"></div>
<svg class="a" style="left:592px;top:763px;" width="16" height="16" viewBox="0 0 16 16"><path d="M1.5 8 L5 4.5 H14.5 V11.5 H5 Z" fill="#cfcfcf"/><circle cx="6" cy="8" r="1.4" fill="#393939"/></svg>
<svg class="a" style="left:647px;top:763px;" width="16" height="16" viewBox="0 0 16 16"><rect x="2.5" y="2.5" width="11" height="11" stroke="#d8c35a" stroke-width="1.1" stroke-dasharray="3 2" fill="none"/></svg>
<div class="a t" style="left:667px;top:762.0px;height:20px;line-height:20px;font-size:12.5px;color:#e6e6e6;">Ellipse Shape</div>
<div class="a" style="left:930px;top:763px;width:21px;height:16px;background:#2c2c2c;border-radius:3px;"></div>
<div class="a" style="left:940px;top:763px;width:1px;height:16px;background:#3a3a3a;"></div>
<svg class="a" style="left:930px;top:763px;" width="21" height="16" viewBox="0 0 21 16"><path d="M8.5 5 H5.5 L2.5 8 L5.5 11 H8.5 Z" fill="#d9b96a"/><path d="M13 5 H16 L19 8 L16 11 H13 Z" fill="#777"/></svg>
<svg class="a" style="left:955px;top:766px;" width="12" height="12" viewBox="0 0 12 12"><circle cx="6" cy="6" r="4.3" stroke="#8a8a8a" stroke-width="1.1" fill="none"/></svg>
<div class="a" style="left:970px;top:672px;width:14px;height:292px;background:#2c2c2c;"></div>
<div class="a" style="left:972px;top:674px;width:10px;height:287px;background:#4c4c4c;border-radius:5px;"></div>
<div class="a" style="left:984px;top:630px;width:6px;height:334px;background:#262626;"></div>
<div class="a" style="left:988px;top:630px;width:3px;height:334px;background:#1e1e1e;"></div>
<div class="a" style="left:986px;top:807px;width:1.5px;height:1.5px;background:#8a8a8a;"></div>
<div class="a" style="left:986px;top:810px;width:1.5px;height:1.5px;background:#8a8a8a;"></div>
<div class="a" style="left:986px;top:813px;width:1.5px;height:1.5px;background:#8a8a8a;"></div>
<div class="a" style="left:986px;top:816px;width:1.5px;height:1.5px;background:#8a8a8a;"></div>
<div class="a" style="left:986px;top:819px;width:1.5px;height:1.5px;background:#8a8a8a;"></div>
<div class="a" style="left:986px;top:822px;width:1.5px;height:1.5px;background:#8a8a8a;"></div>
<div class="a" style="left:986px;top:825px;width:1.5px;height:1.5px;background:#8a8a8a;"></div>
<div class="a" style="left:991px;top:630px;width:923px;height:24px;background:#232323;"></div>
<div class="a" style="left:991px;top:654px;width:923px;height:310px;background:#292929;"></div>
<svg class="a" style="left:991px;top:630px;" width="923" height="24" viewBox="0 0 923 24"><rect x="8.50" y="16" width="1" height="8" fill="#8a8a8a"/><rect x="19.36" y="20" width="1" height="4" fill="#777"/><rect x="30.22" y="20" width="1" height="4" fill="#777"/><rect x="41.08" y="20" width="1" height="4" fill="#777"/><rect x="51.94" y="20" width="1" height="4" fill="#777"/><rect x="62.80" y="16" width="1" height="8" fill="#8a8a8a"/><rect x="73.66" y="20" width="1" height="4" fill="#777"/><rect x="84.52" y="20" width="1" height="4" fill="#777"/><rect x="95.38" y="20" width="1" height="4" fill="#777"/><rect x="106.25" y="20" width="1" height="4" fill="#777"/><rect x="117.11" y="16" width="1" height="8" fill="#8a8a8a"/><rect x="127.97" y="20" width="1" height="4" fill="#777"/><rect x="138.83" y="20" width="1" height="4" fill="#777"/><rect x="149.69" y="20" width="1" height="4" fill="#777"/><rect x="160.55" y="20" width="1" height="4" fill="#777"/><rect x="171.41" y="16" width="1" height="8" fill="#8a8a8a"/><rect x="182.27" y="20" width="1" height="4" fill="#777"/><rect x="193.13" y="20" width="1" height="4" fill="#777"/><rect x="203.99" y="20" width="1" height="4" fill="#777"/><rect x="214.85" y="20" width="1" height="4" fill="#777"/><rect x="225.71" y="16" width="1" height="8" fill="#8a8a8a"/><rect x="236.57" y="20" width="1" height="4" fill="#777"/><rect x="247.43" y="20" width="1" height="4" fill="#777"/><rect x="258.29" y="20" width="1" height="4" fill="#777"/><rect x="269.15" y="20" width="1" height="4" fill="#777"/><rect x="280.02" y="16" width="1" height="8" fill="#8a8a8a"/><rect x="290.88" y="20" width="1" height="4" fill="#777"/><rect x="301.74" y="20" width="1" height="4" fill="#777"/><rect x="312.60" y="20" width="1" height="4" fill="#777"/><rect x="323.46" y="20" width="1" height="4" fill="#777"/><rect x="334.32" y="16" width="1" height="8" fill="#8a8a8a"/><rect x="345.18" y="20" width="1" height="4" fill="#777"/><rect x="356.04" y="20" width="1" height="4" fill="#777"/><rect x="366.90" y="20" width="1" height="4" fill="#777"/><rect x="377.76" y="20" width="1" height="4" fill="#777"/><rect x="388.62" y="16" width="1" height="8" fill="#8a8a8a"/><rect x="399.48" y="20" width="1" height="4" fill="#777"/><rect x="410.34" y="20" width="1" height="4" fill="#777"/><rect x="421.20" y="20" width="1" height="4" fill="#777"/><rect x="432.06" y="20" width="1" height="4" fill="#777"/><rect x="442.92" y="16" width="1" height="8" fill="#8a8a8a"/><rect x="453.79" y="20" width="1" height="4" fill="#777"/><rect x="464.65" y="20" width="1" height="4" fill="#777"/><rect x="475.51" y="20" width="1" height="4" fill="#777"/><rect x="486.37" y="20" width="1" height="4" fill="#777"/><rect x="497.23" y="16" width="1" height="8" fill="#8a8a8a"/><rect x="508.09" y="20" width="1" height="4" fill="#777"/><rect x="518.95" y="20" width="1" height="4" fill="#777"/><rect x="529.81" y="20" width="1" height="4" fill="#777"/><rect x="540.67" y="20" width="1" height="4" fill="#777"/><rect x="551.53" y="16" width="1" height="8" fill="#8a8a8a"/><rect x="562.39" y="20" width="1" height="4" fill="#777"/><rect x="573.25" y="20" width="1" height="4" fill="#777"/><rect x="584.11" y="20" width="1" height="4" fill="#777"/><rect x="594.97" y="20" width="1" height="4" fill="#777"/><rect x="605.83" y="16" width="1" height="8" fill="#8a8a8a"/><rect x="616.69" y="20" width="1" height="4" fill="#777"/><rect x="627.56" y="20" width="1" height="4" fill="#777"/><rect x="638.42" y="20" width="1" height="4" fill="#777"/><rect x="649.28" y="20" width="1" height="4" fill="#777"/><rect x="660.14" y="16" width="1" height="8" fill="#8a8a8a"/><rect x="671.00" y="20" width="1" height="4" fill="#777"/><rect x="681.86" y="20" width="1" height="4" fill="#777"/><rect x="692.72" y="20" width="1" height="4" fill="#777"/><rect x="703.58" y="20" width="1" height="4" fill="#777"/><rect x="714.44" y="16" width="1" height="8" fill="#8a8a8a"/><rect x="725.30" y="20" width="1" height="4" fill="#777"/><rect x="736.16" y="20" width="1" height="4" fill="#777"/><rect x="747.02" y="20" width="1" height="4" fill="#777"/><rect x="757.88" y="20" width="1" height="4" fill="#777"/><rect x="768.74" y="16" width="1" height="8" fill="#8a8a8a"/><rect x="779.60" y="20" width="1" height="4" fill="#777"/><rect x="790.47" y="20" width="1" height="4" fill="#777"/><rect x="801.33" y="20" width="1" height="4" fill="#777"/><rect x="812.19" y="20" width="1" height="4" fill="#777"/><rect x="823.05" y="16" width="1" height="8" fill="#8a8a8a"/><rect x="833.91" y="20" width="1" height="4" fill="#777"/><rect x="844.77" y="20" width="1" height="4" fill="#777"/><rect x="855.63" y="20" width="1" height="4" fill="#777"/><rect x="866.49" y="20" width="1" height="4" fill="#777"/><rect x="877.35" y="16" width="1" height="8" fill="#8a8a8a"/><rect x="888.21" y="20" width="1" height="4" fill="#777"/><rect x="899.07" y="20" width="1" height="4" fill="#777"/><rect x="909.93" y="20" width="1" height="4" fill="#777"/></svg>
<div class="a t" style="left:978.0px;top:630.5px;width:40px;text-align:center;height:16px;line-height:16px;font-size:12.5px;color:#dcdcdc;">0</div>
<div class="a t" style="left:1034.303125px;top:630.5px;width:40px;text-align:center;height:16px;line-height:16px;font-size:12.5px;color:#dcdcdc;">15</div>
<div class="a t" style="left:1088.60625px;top:630.5px;width:40px;text-align:center;height:16px;line-height:16px;font-size:12.5px;color:#dcdcdc;">30</div>
<div class="a t" style="left:1142.909375px;top:630.5px;width:40px;text-align:center;height:16px;line-height:16px;font-size:12.5px;color:#dcdcdc;">45</div>
<div class="a t" style="left:1197.2125px;top:630.5px;width:40px;text-align:center;height:16px;line-height:16px;font-size:12.5px;color:#dcdcdc;">60</div>
<div class="a t" style="left:1251.515625px;top:630.5px;width:40px;text-align:center;height:16px;line-height:16px;font-size:12.5px;color:#dcdcdc;">75</div>
<div class="a t" style="left:1305.81875px;top:630.5px;width:40px;text-align:center;height:16px;line-height:16px;font-size:12.5px;color:#dcdcdc;">90</div>
<div class="a t" style="left:1360.121875px;top:630.5px;width:40px;text-align:center;height:16px;line-height:16px;font-size:12.5px;color:#dcdcdc;">105</div>
<div class="a t" style="left:1414.425px;top:630.5px;width:40px;text-align:center;height:16px;line-height:16px;font-size:12.5px;color:#dcdcdc;">120</div>
<div class="a t" style="left:1468.728125px;top:630.5px;width:40px;text-align:center;height:16px;line-height:16px;font-size:12.5px;color:#dcdcdc;">135</div>
<div class="a t" style="left:1523.03125px;top:630.5px;width:40px;text-align:center;height:16px;line-height:16px;font-size:12.5px;color:#dcdcdc;">150</div>
<div class="a t" style="left:1577.334375px;top:630.5px;width:40px;text-align:center;height:16px;line-height:16px;font-size:12.5px;color:#dcdcdc;">165</div>
<div class="a t" style="left:1631.6374999999998px;top:630.5px;width:40px;text-align:center;height:16px;line-height:16px;font-size:12.5px;color:#dcdcdc;">180</div>
<div class="a t" style="left:1685.940625px;top:630.5px;width:40px;text-align:center;height:16px;line-height:16px;font-size:12.5px;color:#dcdcdc;">195</div>
<div class="a t" style="left:1740.24375px;top:630.5px;width:40px;text-align:center;height:16px;line-height:16px;font-size:12.5px;color:#dcdcdc;">210</div>
<div class="a t" style="left:1794.546875px;top:630.5px;width:40px;text-align:center;height:16px;line-height:16px;font-size:12.5px;color:#dcdcdc;">225</div>
<div class="a t" style="left:1848.85px;top:630.5px;width:40px;text-align:center;height:16px;line-height:16px;font-size:12.5px;color:#dcdcdc;">240</div>
<div class="a" style="left:1000px;top:654px;width:905px;height:17px;background:#444444;"></div>
<div class="a" style="left:988px;top:654px;width:12px;height:310px;background:#1f1f1f;"></div>
<div class="a" style="left:991px;top:673px;width:9px;height:19px;background:#262626;"></div>
<div class="a" style="left:995px;top:653px;width:5px;height:18px;background:#72c8af;border-radius:1px;"></div>
<div class="a" style="left:1905px;top:653px;width:5px;height:18px;background:#72c8af;border-radius:1px;"></div>
<div class="a" style="left:991px;top:672px;width:921px;height:110px;background:#262626;"></div>
<div class="a" style="left:1000px;top:674px;width:905px;height:18px;background:repeating-linear-gradient(135deg,#eaffa0 1.207px,#eaffa0 2.007px,#ccef7f 3.407px,#ccef7f 12.765px,#ddfb94 13.465px,#ddfb94 14.065px,#b3d36b 15.965px,#b6d66e 21.300px,#b6d66e 26.323px);border-radius:2px;"></div>
<div class="a t" style="left:1008px;top:673.0px;height:20px;line-height:20px;font-size:12.5px;color:#1c1c1c;">Frame [First]</div>
<div class="a" style="left:1000px;top:696px;width:905px;height:18px;background:repeating-linear-gradient(135deg,#ffc590 1.207px,#ffc590 2.007px,#f3a771 3.407px,#f3a771 12.765px,#fcbc88 13.465px,#fcbc88 14.065px,#d88f60 15.965px,#db9263 21.300px,#db9263 26.323px);border-radius:2px;"></div>
<div class="a t" style="left:1008px;top:695.0px;height:20px;line-height:20px;font-size:12.5px;color:#ffffff;">Math [First.X] Sine 1</div>
<div class="a" style="left:1000px;top:718px;width:905px;height:18px;background:repeating-linear-gradient(135deg,#ffc590 1.207px,#ffc590 2.007px,#f3a771 3.407px,#f3a771 12.765px,#fcbc88 13.465px,#fcbc88 14.065px,#d88f60 15.965px,#db9263 21.300px,#db9263 26.323px);border-radius:2px;"></div>
<div class="a t" style="left:1008px;top:717.0px;height:20px;line-height:20px;font-size:12.5px;color:#ffffff;">Math [First.X] Sine</div>
<div class="a" style="left:1000px;top:740px;width:905px;height:18px;background:repeating-linear-gradient(135deg,#ffc590 1.207px,#ffc590 2.007px,#f3a771 3.407px,#f3a771 12.765px,#fcbc88 13.465px,#fcbc88 14.065px,#d88f60 15.965px,#db9263 21.300px,#db9263 26.323px);border-radius:2px;"></div>
<div class="a t" style="left:1008px;top:739.0px;height:20px;line-height:20px;font-size:12.5px;color:#ffffff;">Math2 [Position]</div>
<div class="a" style="left:1000px;top:762px;width:905px;height:18px;background:#ffe57a;border-radius:2px;"></div>
<div class="a t" style="left:1008px;top:761.0px;height:20px;line-height:20px;font-size:12.5px;color:#1c1c1c;">Ellipse Shape</div>
<div class="a" style="left:1905px;top:654px;width:9px;height:308px;background:#232323;"></div>
<div class="a" style="left:1905px;top:672px;width:9px;height:110px;background:#262626;"></div>
<div class="a" style="left:1905px;top:653px;width:5px;height:18px;background:#72c8af;border-radius:1px;"></div>
<svg class="a" style="left:1741px;top:643px;" width="17" height="11" viewBox="0 0 17 11"><path d="M1.5 1 H15.5 L8.5 10 Z" fill="#6fcab0"/></svg>
<div class="a" style="left:1748.8831249999998px;top:648px;width:1px;height:316px;background:#6fcab0;"></div>
<div class="a" style="left:494px;top:962px;width:476px;height:13px;background:#2a2a2a;"></div>
<div class="a" style="left:495px;top:964px;width:474px;height:10px;background:#4f4f4f;border-radius:5px;"></div>
<div class="a" style="left:991px;top:962px;width:923px;height:13px;background:#2a2a2a;"></div>
<div class="a" style="left:992px;top:964px;width:920px;height:10px;background:#4f4f4f;border-radius:5px;"></div>
<div class="a" style="left:494px;top:975px;width:490px;height:23px;background:#444444;"></div>
<div class="a" style="left:991px;top:975px;width:923px;height:23px;background:#444444;"></div>
<div class="a" style="left:497px;top:978px;width:21px;height:19px;background:#2b2b2b;border-radius:4px;border:1px solid #1d1d1d;"></div>
<svg class="a" style="left:497px;top:978px;" width="21" height="19" viewBox="0 0 21 19"><path d="M3 9.5 L6.5 6 H17 V13 H6.5 Z" fill="#d0d0d0"/><circle cx="7.5" cy="9.5" r="1.5" fill="#2b2b2b"/></svg>
<div class="a" style="left:776px;top:978px;width:19px;height:19px;background:#2b2b2b;border-radius:4px;border:1px solid #1d1d1d;"></div>
<svg class="a" style="left:776px;top:978px;" width="19" height="19" viewBox="0 0 19 19"><rect x="4" y="4" width="11" height="11" stroke="#d0d0d0" stroke-width="1.2" fill="none"/><rect x="8" y="8" width="3" height="3" fill="#d0d0d0"/></svg>
<div class="a" style="left:799px;top:977px;width:182px;height:20px;background:#555555;border-radius:3px;"></div>
<div class="a" style="left:800px;top:978px;width:86px;height:18px;background:#222222;border-radius:3px;"></div>
<svg class="a" style="left:803px;top:978px;" width="16" height="18" viewBox="0 0 16 18"><path d="M3 5 H13 M5 9 H13 M3 13 H13" stroke="#3fcf6f" stroke-width="2"/></svg>
<div class="a t" style="left:821px;top:977.5px;height:20px;line-height:20px;font-size:12.5px;color:#e8e8e8;">Time Editor</div>
<svg class="a" style="left:892px;top:978px;" width="16" height="18" viewBox="0 0 16 18"><path d="M3 3 V15 H14" stroke="#cfcfcf" stroke-width="1" fill="none"/><path d="M3 14 L13 6" stroke="#cfcfcf" stroke-width="1"/></svg>
<div class="a t" style="left:909px;top:977.5px;height:20px;line-height:20px;font-size:12.5px;color:#e8e8e8;">Graph Editor</div>
<div class="a" style="left:994px;top:978px;width:20px;height:19px;background:#2b2b2b;border-radius:4px;border:1px solid #1d1d1d;"></div>
<svg class="a" style="left:994px;top:978px;" width="20" height="19" viewBox="0 0 20 19"><path d="M3 5 H17 M3 9 H12 M14 9 H17 M3 13 H6 M8 13 H12" stroke="#d0d0d0" stroke-width="1.5"/></svg>
<svg class="a" style="left:1008px;top:991px;" width="5" height="5" viewBox="0 0 5 5"><path d="M4 0 V4 H0 Z" fill="#5cc9a7"/></svg>
<div class="a" style="left:1015px;top:979px;width:150px;height:16px;background:#2a2a2a;border-radius:3px;"></div>
<div class="a t" style="left:1017px;top:977.5px;height:20px;line-height:20px;font-size:12.5px;color:#e8e8e8;">Default Keyframe Layer</div>
<div class="a" style="left:1171px;top:979px;width:70px;height:16px;background:#2a2a2a;border-radius:3px;"></div>
<div class="a t" style="left:1176px;top:977.5px;height:20px;line-height:20px;font-size:12.5px;color:#555;">F</div>
<div class="a t" style="left:1187px;top:977.5px;height:20px;line-height:20px;font-size:12.5px;color:#dcdcdc;">-</div>
<div class="a t" style="left:1247px;top:977.5px;height:20px;line-height:20px;font-size:12.5px;color:#e2e2e2;">Align:</div>
<div class="a" style="left:1283px;top:978px;width:54px;height:19px;background:#2b2b2b;border-radius:4px;border:1px solid #1d1d1d;"></div>
<svg class="a" style="left:1284.0px;top:978px;" width="18" height="19" viewBox="0 0 18 19"><path d="M3 3 V16" stroke="#d0d0d0" stroke-width="1"/><path d="M5 7 H8 M10 7 H12 M5 12 H14" stroke="#d0d0d0" stroke-width="1.5"/><circle cx="5.5" cy="12" r="1" fill="#5cc9a7"/></svg>
<svg class="a" style="left:1301.5px;top:978px;" width="18" height="19" viewBox="0 0 18 19"><path d="M9 3 V16" stroke="#5cc9a7" stroke-width="1"/><path d="M4 7 H7 M11 7 H14 M4 12 H14" stroke="#d0d0d0" stroke-width="1.5"/></svg>
<svg class="a" style="left:1319.0px;top:978px;" width="18" height="19" viewBox="0 0 18 19"><path d="M15 3 V16" stroke="#d0d0d0" stroke-width="1"/><path d="M4 7 H7 M9 7 H13 M4 12 H13" stroke="#d0d0d0" stroke-width="1.5"/></svg>
<div class="a" style="left:1341px;top:978px;width:20px;height:19px;background:#2b2b2b;border-radius:4px;border:1px solid #1d1d1d;"></div>
<svg class="a" style="left:1341px;top:978px;" width="20" height="19" viewBox="0 0 20 19"><rect x="4" y="4" width="12" height="11" stroke="#cfcfcf" stroke-width="1" stroke-dasharray="3 2" fill="none"/><rect x="8.5" y="8" width="3" height="3" fill="#cfcfcf"/></svg>
<div class="a" style="left:1362px;top:978px;width:31px;height:19px;background:#2b2b2b;border-radius:4px;border:1px solid #1d1d1d;"></div>
<svg class="a" style="left:1362px;top:978px;" width="20" height="19" viewBox="0 0 20 19"><path d="M5 9 A5 5 0 0 1 15 9 L15 12" stroke="#d8d8d8" stroke-width="2.2" fill="none"/></svg>
<div class="a" style="left:1381px;top:979px;width:1px;height:17px;background:#1c1c1c;"></div>
<svg class="a" style="left:1382px;top:978px;" width="10" height="19" viewBox="0 0 10 19"><path d="M2.5 6.5 L7 9.5 L2.5 12.5 Z" stroke="#999" stroke-width="0.9" fill="none"/></svg>
<div class="a" style="left:1397px;top:978px;width:31px;height:19px;background:#2b2b2b;border-radius:4px;border:1px solid #1d1d1d;"></div>
<svg class="a" style="left:1397px;top:978px;" width="20" height="19" viewBox="0 0 20 19"><path d="M3 10 H17" stroke="#cfcfcf" stroke-width="1"/><path d="M8 5 V15 M11 7 V13" stroke="#cfcfcf" stroke-width="1.3"/></svg>
<div class="a" style="left:1416px;top:979px;width:1px;height:17px;background:#1c1c1c;"></div>
<svg class="a" style="left:1417px;top:978px;" width="10" height="19" viewBox="0 0 10 19"><path d="M2.5 6.5 L7 9.5 L2.5 12.5 Z" stroke="#999" stroke-width="0.9" fill="none"/></svg>
<svg class="a" style="left:1742px;top:979px;" width="16" height="16" viewBox="0 0 16 16"><circle cx="7" cy="7" r="5.5" stroke="#cfcfcf" stroke-width="1.1" fill="none"/><path d="M4.5 7 H9.5" stroke="#cfcfcf" stroke-width="1.1"/><path d="M11 11 L14 14" stroke="#cfcfcf" stroke-width="1.6"/></svg>
<div class="a" style="left:1767px;top:985px;width:115px;height:4px;background:#535353;border-radius:2px;"></div>
<div class="a" style="left:1761px;top:981px;width:12px;height:12px;border-radius:50%;background:#6fcab0;"></div>
<div class="a" style="left:1765px;top:985px;width:4px;height:4px;border-radius:50%;background:#3f8a6e;"></div>
<svg class="a" style="left:1886px;top:979px;" width="16" height="16" viewBox="0 0 16 16"><circle cx="7" cy="7" r="5.5" stroke="#cfcfcf" stroke-width="1.1" fill="none"/><path d="M4.5 7 H9.5 M7 4.5 V9.5" stroke="#cfcfcf" stroke-width="1.1"/><path d="M11 11 L14 14" stroke="#cfcfcf" stroke-width="1.6"/></svg>
<div class="a" style="left:494px;top:1004px;width:1420px;height:22px;background:#3a3a3a;"></div>
<div class="a" style="left:498px;top:1009px;width:2px;height:2px;background:#8a8a8a;"></div>
<div class="a" style="left:498px;top:1014px;width:2px;height:2px;background:#8a8a8a;"></div>
<div class="a" style="left:498px;top:1019px;width:2px;height:2px;background:#8a8a8a;"></div>
<div class="a" style="left:506px;top:1006px;width:20px;height:19px;background:#2b2b2b;border-radius:4px;border:1px solid #1d1d1d;"></div>
<svg class="a" style="left:506px;top:1006px;" width="20" height="19" viewBox="0 0 20 19"><path d="M4 4 H16 V13 H9 L6 16 V13 H4 Z" fill="#d8d8d8"/><path d="M6.5 7 H13.5 M6.5 10 H13.5" stroke="#2b2b2b" stroke-width="1.1"/></svg>
<svg class="a" style="left:520px;top:1019px;" width="5" height="5" viewBox="0 0 5 5"><path d="M4 0 V4 H0 Z" fill="#5cc9a7"/></svg>
<div class="a" style="left:528px;top:1007px;width:18px;height:16px;background:#d9c27a;border-radius:2px;"></div>
<div class="a t" style="left:528.0px;top:1005.5px;width:18px;text-align:center;height:20px;line-height:20px;font-size:12.5px;color:#2a2a2a;">0</div>
<div class="a" style="left:554px;top:1012px;width:6px;height:6px;border-radius:50%;background:#d9c27a;"></div>
<div class="a t" style="left:565px;top:1005.5px;height:20px;line-height:20px;font-size:12.01px;color:#dedede;">You are working in an unsaved scene.</div>
<div class="a" style="left:1610px;top:1006px;width:80px;height:18px;background:#d3c07b;border-radius:2px;"></div>
<div class="a t" style="left:1615px;top:1005.0px;height:20px;line-height:20px;font-size:12.5px;color:#2a2a2a;">Feedback</div>
<svg class="a" style="left:1670px;top:1007px;" width="16" height="16" viewBox="0 0 16 16"><rect x="3" y="2" width="10" height="12" fill="#f4f4f4" stroke="#6ad36a" stroke-width="1"/><path d="M6 12 L12 5" stroke="#e8772e" stroke-width="2.4"/></svg>
<div class="a" style="left:1693px;top:1006px;width:109px;height:18px;background:#33c46c;border-radius:2px;"></div>
<div class="a t" style="left:1698px;top:1005.0px;height:20px;line-height:20px;font-size:12.5px;color:#1c2a1f;">Upgrade to Pro</div>
<svg class="a" style="left:1780px;top:1007px;" width="17" height="16" viewBox="0 0 17 16"><path d="M3 8 Q3 14 8 14 L8 8 Z M14 8 Q14 14 9 14 L9 8 Z" fill="#f4c430"/></svg>
<div class="a" style="left:1805px;top:1006px;width:106px;height:18px;background:#4aaeef;border-radius:2px;"></div>
<div class="a t" style="left:1810px;top:1005.0px;height:20px;line-height:20px;font-size:12.5px;color:#10243a;">Tips and Tricks</div>
<svg class="a" style="left:1888px;top:1007px;" width="17" height="16" viewBox="0 0 17 16"><path d="M14 2 Q8 3 5 9 L8 12 Q14 9 14 2 Z" fill="#e8e8e8"/><path d="M5 9 L3 11 L6 11 M8 12 L6 14 L6 11" fill="#e84c3d"/><circle cx="10.5" cy="6" r="1.3" fill="#4aaeef"/></svg>
<div class="a" style="left:1372px;top:51px;width:27px;height:26px;background:#2e2e2e;border-radius:4px;border:1px solid #242424;"></div>
<svg class="a" style="left:1372px;top:51px;" width="27" height="26" viewBox="0 0 27 26"><circle cx="6.0" cy="6" r="1.3" fill="#e0cf72"/><circle cx="13.5" cy="6" r="1.3" fill="#e0cf72"/><circle cx="21.0" cy="6" r="1.3" fill="#e0cf72"/><circle cx="6.0" cy="13" r="1.3" fill="#e0cf72"/><circle cx="13.5" cy="13" r="1.3" fill="#e0cf72"/><circle cx="21.0" cy="13" r="1.3" fill="#e0cf72"/><circle cx="6.0" cy="20" r="1.3" fill="#e0cf72"/><circle cx="13.5" cy="20" r="1.3" fill="#e0cf72"/><circle cx="21.0" cy="20" r="1.3" fill="#e0cf72"/></svg>
<div class="a" style="left:1402px;top:51px;width:27px;height:26px;background:#2e2e2e;border-radius:4px;border:1px solid #242424;"></div>
<svg class="a" style="left:1402px;top:51px;" width="27" height="26" viewBox="0 0 27 26"><path d="M5 9 L9 5 H21 V17 L17 21 H5 Z" fill="#eee"/><rect x="5" y="9" width="12" height="12" fill="#e0cf72"/><path d="M17 9 L21 5" stroke="#aaa" stroke-width="1"/></svg>
<div class="a" style="left:1432px;top:51px;width:27px;height:26px;background:#2e2e2e;border-radius:4px;border:1px solid #242424;"></div>
<svg class="a" style="left:1432px;top:51px;" width="27" height="26" viewBox="0 0 27 26"><rect x="4" y="4" width="19" height="18" rx="4" stroke="#e8e8e8" stroke-width="1.2" fill="none"/><path d="M9 7 H17 V10 H12 V12 H16 V15 H12 V20 H9 Z" fill="#e0cf72"/></svg>
<div class="a" style="left:1462px;top:51px;width:27px;height:26px;background:#2e2e2e;border-radius:4px;border:1px solid #242424;"></div>
<svg class="a" style="left:1462px;top:51px;" width="27" height="26" viewBox="0 0 27 26"><circle cx="8" cy="6" r="1.2" fill="#e0cf72"/><circle cx="16" cy="6" r="1.2" fill="#e0cf72"/><circle cx="12" cy="10" r="1.2" fill="#e0cf72"/><circle cx="6" cy="15" r="1.5" fill="#e0cf72"/><circle cx="14" cy="15" r="2.2" fill="#ccc"/><circle cx="21" cy="13" r="2.2" fill="#e0cf72"/><circle cx="18" cy="21" r="1.5" fill="#e0cf72"/></svg>
<div class="a" style="left:1497px;top:51px;width:27px;height:26px;background:#2e2e2e;border-radius:4px;border:1px solid #242424;"></div>
<svg class="a" style="left:1497px;top:51px;" width="27" height="26" viewBox="0 0 27 26"><path d="M3 13 H6 M8 13 H11 M13 13 H20" stroke="#8fdc8f" stroke-width="1.6"/><path d="M16 8 L21 13 L16 18" stroke="#8fdc8f" stroke-width="1.8" fill="none"/></svg>
<div class="a" style="left:1528px;top:51px;width:27px;height:26px;background:#2e2e2e;border-radius:4px;border:1px solid #242424;"></div>
<svg class="a" style="left:1528px;top:51px;" width="27" height="26" viewBox="0 0 27 26"><path d="M5 4 V22" stroke="#ddd" stroke-width="1"/><rect x="8" y="8" width="8" height="4" fill="#8fdc8f"/><rect x="8" y="14" width="14" height="5" fill="#8fdc8f"/></svg>
<div class="a" style="left:1562px;top:51px;width:27px;height:26px;background:#2e2e2e;border-radius:4px;border:1px solid #242424;"></div>
<svg class="a" style="left:1562px;top:51px;" width="27" height="26" viewBox="0 0 27 26"><circle cx="13.5" cy="5" r="2" fill="#9ad0f0"/><circle cx="13.5" cy="13" r="2" fill="#9ad0f0"/><circle cx="13.5" cy="21" r="2" fill="#9ad0f0"/><circle cx="5.5" cy="13" r="2" fill="#9ad0f0"/><circle cx="21.5" cy="13" r="2" fill="#9ad0f0"/><path d="M13.5 7 V19 M7.5 13 H19.5" stroke="#9ad0f0" stroke-width="1"/></svg>
<div class="a" style="left:1592px;top:51px;width:27px;height:26px;background:#2e2e2e;border-radius:4px;border:1px solid #242424;"></div>
<svg class="a" style="left:1592px;top:51px;" width="27" height="26" viewBox="0 0 27 26"><circle cx="6" cy="13" r="2" fill="#9ad0f0"/><circle cx="13.5" cy="13" r="2" fill="#9ad0f0"/><circle cx="21" cy="13" r="2" fill="#9ad0f0"/><path d="M6 13 H21" stroke="#9ad0f0" stroke-width="1"/></svg>
<div class="a" style="left:1622px;top:51px;width:27px;height:26px;background:#2e2e2e;border-radius:4px;border:1px solid #242424;"></div>
<svg class="a" style="left:1622px;top:51px;" width="27" height="26" viewBox="0 0 27 26"><path d="M16 5 Q7 8 8 14 Q9 19 16 21" stroke="#e0e0e0" stroke-width="1.6" fill="none"/><path d="M14 13 H19 M16 3 V23" stroke="#8fdc8f" stroke-width="1.1"/></svg>
<div class="a" style="left:1652px;top:51px;width:27px;height:26px;background:#2e2e2e;border-radius:4px;border:1px solid #242424;"></div>
<svg class="a" style="left:1652px;top:51px;" width="27" height="26" viewBox="0 0 27 26"><path d="M3 7 H24 M3 19 H24" stroke="#ddd" stroke-width="1"/><rect x="4" y="9" width="4" height="8" fill="#e0cf72"/><rect x="10" y="9" width="8" height="8" fill="#e0cf72"/><rect x="20" y="9" width="4" height="8" fill="#e0cf72"/></svg>
<div class="a" style="left:1687px;top:51px;width:27px;height:26px;background:#2e2e2e;border-radius:4px;border:1px solid #242424;"></div>
<svg class="a" style="left:1687px;top:51px;" width="27" height="26" viewBox="0 0 27 26"><path d="M4 6 L18 3 L19 7 L13.5 8 L15 17 L12 17.5 L10.5 8.8 L5 10 Z" fill="#e0cf72"/><path d="M5 22 Q10 17 15 21 Q19 24 23 20" stroke="#ddd" stroke-width="1" fill="none"/></svg>
<div class="a" style="left:1722px;top:51px;width:27px;height:26px;background:#2e2e2e;border-radius:4px;border:1px solid #242424;"></div>
<svg class="a" style="left:1722px;top:51px;" width="27" height="26" viewBox="0 0 27 26"><path d="M4 4 H23" stroke="#9ad0f0" stroke-width="1.3"/><rect x="4" y="7" width="5" height="4" fill="#ddd"/><rect x="10" y="13" width="8" height="4" fill="#ddd"/><rect x="18" y="19" width="5" height="4" fill="#ddd"/></svg>
<div class="a" style="left:1752px;top:51px;width:27px;height:26px;background:#2e2e2e;border-radius:4px;border:1px solid #242424;"></div>
<svg class="a" style="left:1752px;top:51px;" width="27" height="26" viewBox="0 0 27 26"><path d="M4 4 H23" stroke="#9ad0f0" stroke-width="1.3"/><rect x="4" y="7" width="8" height="4" fill="#ddd"/><rect x="8" y="13" width="10" height="4" fill="#ddd"/><rect x="12" y="19" width="11" height="4" fill="#ddd"/></svg>
<div class="a" style="left:1787px;top:51px;width:27px;height:26px;background:#2e2e2e;border-radius:4px;border:1px solid #242424;"></div>
<svg class="a" style="left:1787px;top:51px;" width="27" height="26" viewBox="0 0 27 26"><rect x="3" y="4" width="21" height="18" stroke="#ddd" stroke-width="1.2" fill="none"/><rect x="6" y="7" width="4" height="12" fill="#e0cf72"/><rect x="11.5" y="7" width="4" height="12" fill="#e0cf72"/><rect x="17" y="7" width="4" height="12" fill="#e0cf72"/></svg>
<div class="a" style="left:1817px;top:51px;width:27px;height:26px;background:#2e2e2e;border-radius:4px;border:1px solid #242424;"></div>
<svg class="a" style="left:1817px;top:51px;" width="27" height="26" viewBox="0 0 27 26"><rect x="3" y="4" width="21" height="18" stroke="#ddd" stroke-width="1.2" fill="none"/><rect x="6" y="7" width="15" height="4" fill="#e0cf72"/><rect x="6" y="14" width="15" height="4" fill="#e0cf72"/></svg>
<div class="a" style="left:1847px;top:51px;width:27px;height:26px;background:#2e2e2e;border-radius:4px;border:1px solid #242424;"></div>
<svg class="a" style="left:1847px;top:51px;" width="27" height="26" viewBox="0 0 27 26"><rect x="3" y="4" width="21" height="18" stroke="#ddd" stroke-width="1.2" fill="none"/><rect x="6" y="7" width="6" height="4" fill="#e0cf72"/><rect x="14" y="7" width="7" height="4" fill="#e0cf72"/><rect x="6" y="14" width="6" height="4" fill="#e0cf72"/><rect x="14" y="14" width="7" height="4" fill="#e0cf72"/></svg>
<div class="a" style="left:1882px;top:51px;width:27px;height:26px;background:#2e2e2e;border-radius:4px;border:1px solid #242424;"></div>
<svg class="a" style="left:1882px;top:51px;" width="27" height="26" viewBox="0 0 27 26"><rect x="4" y="9" width="13" height="11" rx="2" fill="#dcdcdc"/><path d="M17 12 L23 9 V20 L17 17 Z" fill="#dcdcdc"/><circle cx="8" cy="7" r="2" fill="#dcdcdc"/></svg>
<div class="a" style="left:1459px;top:63px;width:2px;height:2px;background:#2a2a2a;"></div>
<div class="a" style="left:1494px;top:63px;width:2px;height:2px;background:#2a2a2a;"></div>
<div class="a" style="left:1525px;top:63px;width:2px;height:2px;background:#2a2a2a;"></div>
<div class="a" style="left:1559px;top:63px;width:2px;height:2px;background:#2a2a2a;"></div>
<div class="a" style="left:1619px;top:63px;width:2px;height:2px;background:#2a2a2a;"></div>
<div class="a" style="left:1683px;top:63px;width:2px;height:2px;background:#2a2a2a;"></div>
<div class="a" style="left:1719px;top:63px;width:2px;height:2px;background:#2a2a2a;"></div>
<div class="a" style="left:1783px;top:63px;width:2px;height:2px;background:#2a2a2a;"></div>
<div class="a" style="left:1878px;top:63px;width:2px;height:2px;background:#2a2a2a;"></div>
<div class="a" style="left:1914px;top:49px;width:6px;height:980px;background:#1f1f1f;"></div>
</body></html>
